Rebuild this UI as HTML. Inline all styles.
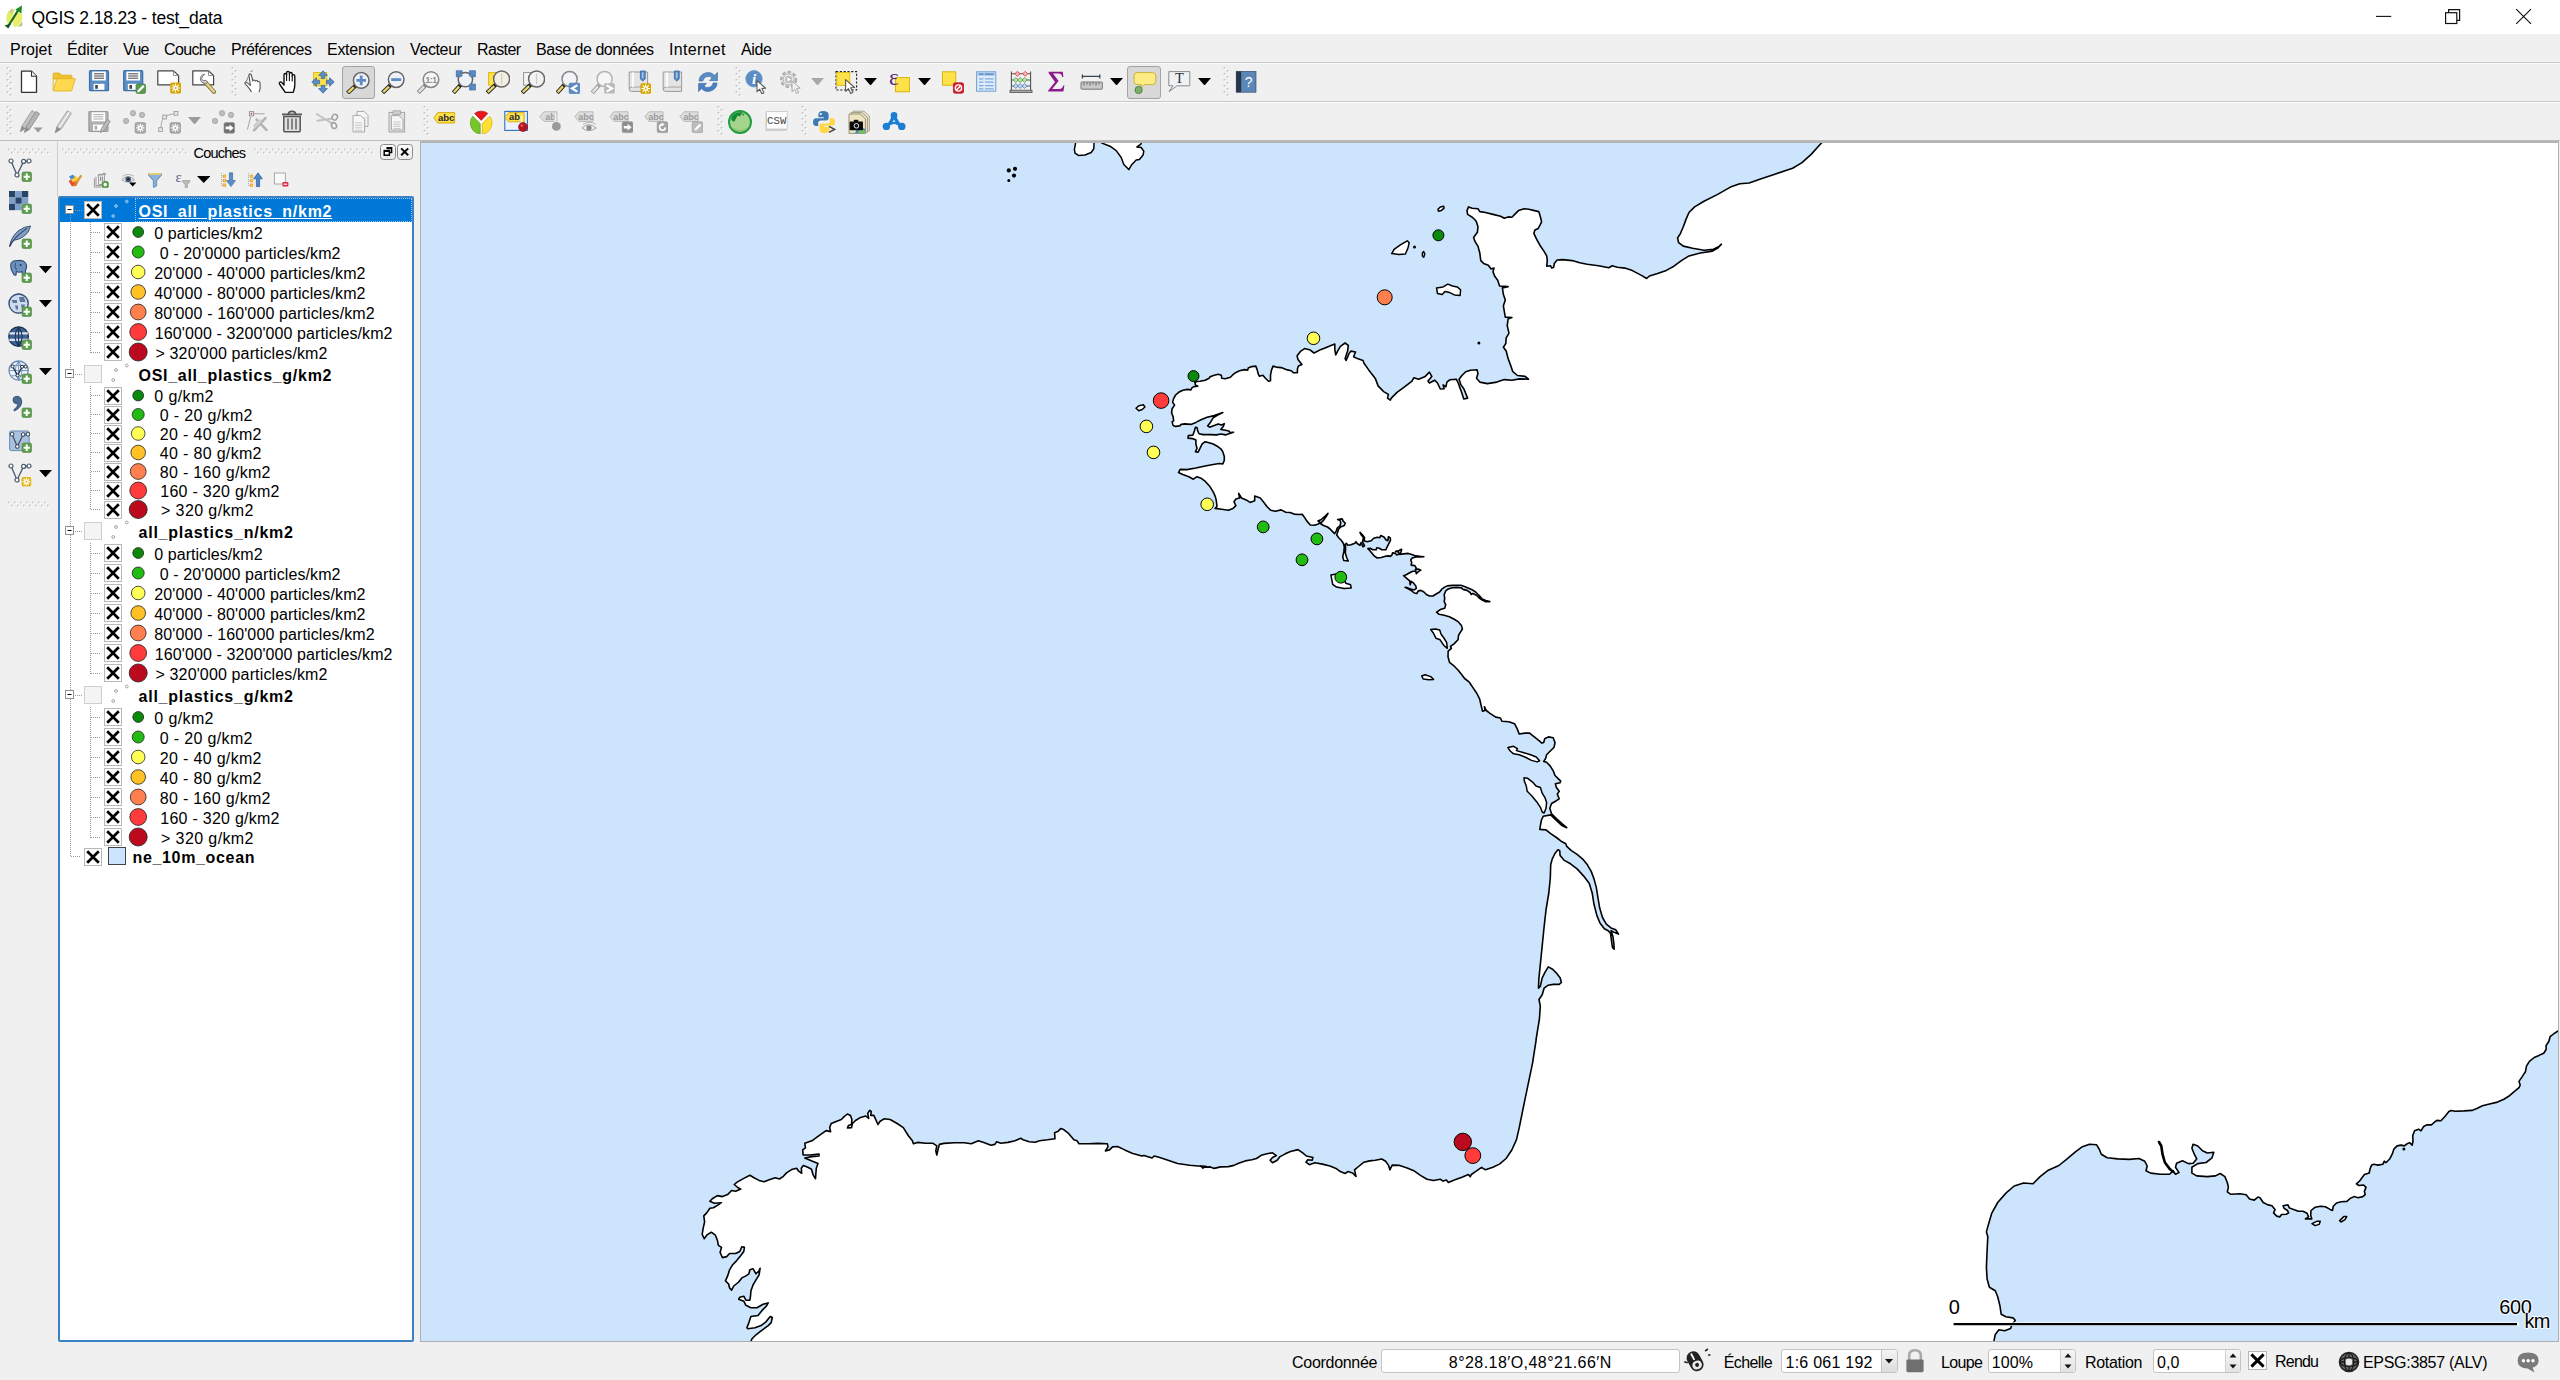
<!DOCTYPE html>
<html><head><meta charset="utf-8"><title>QGIS 2.18.23 - test_data</title>
<style>
*{margin:0;padding:0;box-sizing:border-box}
html,body{width:2560px;height:1380px;overflow:hidden;background:#f0f0f0;font-family:"Liberation Sans", sans-serif;}
.t{position:absolute;white-space:pre;line-height:1;font-family:"Liberation Sans", sans-serif;}
.a{position:absolute}
#title{left:0;top:0;width:2560px;height:34px;background:#fff}
#menu{left:0;top:34px;width:2560px;height:28px;background:#f0f0f0}
.hl{left:0;width:2560px;height:1px;background:#c9c9c9}
#map{left:420px;top:141px;width:2139px;height:1201px;border:1px solid #aeaeae;border-top:2px solid #b4b4b4;background:#cce5fd;overflow:hidden}
#tree{left:58px;top:196px;width:356px;height:1146px;background:#fff;border:2px solid #3c80c4;border-radius:2px}
#sel{left:60px;top:198px;width:352px;height:24px;background:#0078d7}
.cb{position:absolute;width:18px;height:18px;background:#fff;border:1px solid #b8b8b8}
.cbe{position:absolute;width:18px;height:18px;background:#f4f4f4;border:1px solid #cfcfcf}
.inp{position:absolute;background:#fff;border:1px solid #c4c4c4;border-radius:3px}
</style></head>
<body>
<div class="a" id="title"></div><div class="a" id="menu"></div>
<div class="a hl" style="top:62px"></div><div class="a hl" style="top:101px"></div><div class="a hl" style="top:140px;background:#bdbdbd"></div><div class="a hl" style="top:63px;background:#fafafa"></div><div class="a hl" style="top:102px;background:#fafafa"></div>
<div class="a" style="left:57px;top:141px;width:1px;height:56px;background:#cfcfcf"></div>
<div class="a" id="map"><svg class="a" style="left:-421px;top:-143px" width="2560" height="1380" viewBox="0 0 2560 1380">
<path d="M1830,120 1821.8,142.8 1818.9,145.7 1811.4,154.1 1802,162.6 1792.6,168.3 1775.6,173.9 1760.5,179 1749.2,183 1739.8,183.7 1730.4,187.1 1717.2,194.6 1704,201.2 1694.6,206.9 1689,212.5 1686.1,219.1 1683.3,226.7 1680.5,233.3 1677.6,238 1678.6,242.7 1683.3,246.1 1692.7,248.3 1704,250.2 1713.4,249.3 1719.1,246.4 1721.4,244.2 1718.1,247.8 1712.5,251.1 1700.3,253 1689,255.9 1681.4,260.6 1673.9,266.2 1666.3,270.4 1656.9,273.8 1649.4,276 1646.6,278.5 1641.9,275.6 1632.4,270.6 1624.9,268.1 1617.4,267.2 1612.1,265.8 1608.9,267.7 1598.5,265.8 1587.2,264.3 1579.7,262.8 1572.2,260.6 1562.7,259.6 1557.1,260 1554.3,263.4 1553.7,267.2 1551.8,268.1 1550.5,265.8 1546.7,266.2 1547.3,260.6 1546.7,255.9 1543.9,251.1 1540.1,245.5 1536.4,238.9 1533.9,233.3 1534.9,230 1538.2,228.5 1540.1,224.8 1541.6,221.9 1540.5,217.2 1538.8,211.6 1534.5,210.6 1528.8,209.3 1524.1,208.8 1518.5,210.6 1514.7,214.4 1511.9,217.2 1508.1,216.9 1504.3,218.2 1500.6,216.3 1493,214.4 1485.5,212.5 1479.8,211.6 1478,208.8 1472.3,208.2 1468.5,206.9 1467,210.6 1467.6,214.4 1472.3,217.2 1476.1,221 1478,226.7 1477.4,232.3 1473.6,237.4 1475.1,241.7 1478,246.4 1479.8,253 1480.8,260.6 1483.6,263.4 1488.3,265.3 1491.1,269 1494,268.1 1493,271.9 1494.9,276.6 1497.7,280.3 1499.6,286 1508.1,286.6 1502.4,287.9 1503.4,294.5 1505.3,300.1 1503.4,305.8 1504.3,311.4 1505.3,317.1 1511.9,317.5 1508.1,319 1507.2,325.6 1509,333.1 1506.2,337.8 1505.8,343.5 1503.4,347.2 1506.2,351 1508.1,358.5 1510.9,366.1 1512.8,371.7 1517.5,375.5 1525.1,376.4 1528.4,379.2 1519.4,378.9 1511.9,380.2 1504.3,379.6 1496.8,382.1 1487.4,383.6 1479.8,382.1 1476.5,378.3 1478,373.6 1477,369.8 1470.4,370.2 1465.7,371.7 1461.9,375.5 1459.1,379.2 1461,384.9 1463.8,388.7 1465.7,393.4 1467.6,398.1 1463.8,399 1461,390.6 1458.2,383 1456.3,379.2 1449.7,379.8 1446.9,382.1 1445.9,386.8 1443.1,384.9 1444.1,388.7 1440.3,389 1437.5,383 1434.6,380.2 1429.4,383 1428,381.1 1431.8,376.4 1429.4,372.1 1425.2,376.4 1418.6,379.2 1413.9,377.7 1412,381.1 1404.5,386.8 1397,392.4 1391.3,398.1 1390.3,400.1 1387.5,398.2 1388.4,394.4 1383.7,391.6 1378.1,385.9 1375.3,378.4 1368.7,369.9 1364,363.3 1363,360.5 1357.4,358.6 1353.6,356.7 1355.5,352 1350.8,351.1 1348.9,353.9 1346.1,360.5 1345.1,358.6 1347.6,351.1 1348.3,345.4 1345.1,343 1340.4,346.4 1337.6,351.1 1335.7,354.9 1334.8,349.2 1334.8,344.1 1331,345.4 1324.4,348.3 1319.7,350.1 1314,353 1310.3,350.1 1304.6,348.6 1300.8,351.1 1297.1,355.8 1298,359.6 1301.9,364.6 1298.4,366.1 1297.4,369.1 1297.4,372.7 1293.3,372.7 1291.3,370.7 1286.2,369.6 1281.1,367.6 1276.1,367.1 1273,366.1 1271.5,370.1 1270.5,375.2 1270.5,380.8 1268.5,381.3 1265.4,378.3 1262.9,375.2 1259.3,376.2 1258.3,374.2 1257.3,370.1 1255.8,366.1 1251.7,366.6 1248.2,368.1 1247.7,370.1 1244.6,369.6 1239.5,370.7 1235.5,372.7 1232.4,375.2 1230.4,377.2 1225.4,378.8 1221.8,378.3 1221.3,375.2 1218.3,374.2 1214.2,375.2 1210.1,376.7 1209.1,378.3 1205.1,380.3 1200,381.3 1196.4,381.5 1194.9,382.5 1195.4,384.9 1197.8,386.2 1193.9,386.6 1192.1,387.6 1190.9,389.9 1187.3,389.4 1182.8,390.2 1178.7,392.3 1175.6,395 1173.6,398.6 1172.6,402.1 1174.6,405.1 1172.1,408.7 1171.6,412.7 1173.1,416.8 1173.6,420.9 1172.1,421.9 1173.1,425.4 1175.6,426.4 1179.7,425.9 1181.2,424.4 1184.8,423.9 1190.9,424.4 1195.9,422.4 1201,419.8 1207.1,417.3 1214.2,415.6 1219.3,413.8 1222.8,412.6 1217.2,415.3 1213.2,417.8 1210.7,421.9 1207.6,425.9 1209.6,427.2 1214.2,425.4 1218.3,423.9 1221.3,424.9 1224.3,423.7 1223.3,426.4 1220.8,429.5 1224.3,430 1228.9,431 1229.9,432.5 1233.5,432.2 1228.9,433.8 1225.4,434.9 1221.3,434 1216.2,434.9 1210.1,434.6 1203,434.6 1199,433.8 1197.8,431 1197,427.5 1195.4,427.2 1194.4,431 1192.9,435.1 1188.3,435.6 1188,438.1 1192.4,438.6 1195.9,440.1 1195.9,444.2 1197,448.3 1195.4,451.8 1198,452.3 1200,448.3 1202,444.2 1205.1,441.7 1209.1,442.7 1213.2,444 1217.2,446.2 1220.8,448.8 1222.8,451.8 1224.3,456.4 1224.3,460.4 1222.8,464 1219.3,463.5 1213.2,464.5 1205.1,466 1195.9,468 1186.8,469.6 1180.2,469.4 1178.5,472.6 1182.8,474.6 1188.8,476.7 1193.4,479.2 1197,476.7 1201,478.2 1205.6,481.7 1210.1,486.8 1213.2,491.9 1215.2,496.4 1216.2,500 1217,506.5 1215.1,508.4 1221.7,509.3 1228.3,510.3 1233,508.4 1235.9,505.6 1234,501.8 1235.9,499 1239.6,498 1238.7,493.3 1241.5,498 1246.2,499.9 1250,502.4 1254.7,500.8 1254.7,496.1 1260.3,498 1264.1,502.7 1266.9,506.5 1270.7,510.3 1275.4,511.2 1281.1,509.9 1285.8,512.2 1290,512.5 1294.1,514.1 1298.6,514.5 1302.2,514.3 1304.2,516.9 1306.7,520.9 1310.3,525 1314.3,525.3 1318.4,524 1319.9,522.2 1317.9,520.9 1321.4,519.4 1325,516.4 1328,513.3 1326,516.9 1323.5,520.4 1320.4,523.5 1323.5,525.5 1327.5,527 1330.1,529 1332.6,531.6 1334.6,533.6 1336.2,531.1 1337.2,528 1340.2,525.5 1340.7,523 1340.2,520.4 1337.7,519.6 1342.2,518.9 1343.3,521.4 1345.3,523 1344.3,525.5 1340.7,527 1338.7,529 1337.7,532.1 1336.7,535.1 1338.7,537.7 1341.2,540.2 1343.3,543.3 1344.3,546.8 1343.8,551.9 1342.7,556.9 1343.8,560.5 1348.3,561 1346.8,558 1345.3,552.9 1345.6,548.3 1345.3,544.3 1346.3,543.3 1347.8,545.3 1350.9,544.8 1354.9,543.3 1355.9,541.7 1357.5,543.8 1360,545.3 1361,542.7 1363,546.8 1364.6,545.8 1362.5,541.7 1363.5,537.7 1361,534.6 1360,532.4 1363,535.6 1364.6,537.7 1364.1,540.7 1367.1,541.7 1371.2,540.7 1373.7,538.2 1377.2,537.2 1379.8,537.7 1380.8,535.6 1384.3,537.2 1385.9,539.7 1387.9,540.7 1388.4,536.7 1390.4,538.2 1390.4,540.7 1388.4,544.3 1386.9,547.3 1385.9,549.8 1381.8,549.8 1379.3,548.3 1376.7,547.8 1376.2,549.8 1372.7,549.8 1370.1,548.3 1367.9,548.6 1370.1,550.9 1372.2,553.4 1374.2,555.9 1377.2,558 1381.3,557.5 1384.8,556.4 1388.4,555.9 1390.4,556.4 1392,554.9 1392.5,552.9 1395.5,553.4 1396.5,554.9 1399.1,553.9 1398.5,551.9 1395.5,551.4 1399.1,550.4 1401.6,549.3 1401.1,551.9 1399.6,554.4 1403.6,553.9 1408.2,553.4 1411.7,554.4 1415.8,555.9 1419.9,556.4 1423.9,556.7 1420.4,556.9 1415.8,556.9 1412.2,558 1410.7,560 1411.7,562.5 1411.2,565.1 1414.8,565.6 1416.3,568.1 1415.3,569.6 1418.8,569.1 1420.8,570.1 1418.3,571.7 1416.3,573.7 1415.8,571.2 1412.7,571.2 1409.7,572.7 1406.2,574.7 1403.6,575.7 1406.7,578.3 1409.7,580.8 1410.2,584.8 1411.2,581.3 1413.3,582.8 1415.8,585.9 1416.3,588.4 1414.3,589.9 1410.7,588.9 1407.7,587.9 1405.1,587.4 1408.2,588.9 1411.7,590.9 1414.3,593 1416.8,593.5 1418.3,590.9 1420.8,590.4 1423.9,592 1426.4,594.5 1429.5,596 1433,596 1436.1,594 1439.6,592 1441.6,589.4 1444.2,587.4 1447.2,585.9 1452.3,585.4 1457.4,585.2 1460.9,585.2 1464.5,586.4 1468,587.9 1471.6,589.4 1475.6,592 1479.2,595.5 1482.2,599.1 1485.8,600.6 1489.8,601.6 1485.3,601.6 1482.2,600.1 1478.7,597.5 1476.1,595 1472.6,593.5 1471.1,594.5 1470.1,592.5 1467,590.4 1463,589.4 1461.4,587.9 1457.4,587.4 1452.3,587.7 1448.2,588.9 1445.7,590.9 1444.2,594.5 1444.7,598.5 1444.2,601.6 1445.7,604.6 1444.7,608.2 1441.1,609.2 1438.1,611.2 1436.6,612.2 1439.1,614.3 1444.2,615.3 1449.3,616.8 1454.3,619.3 1458.4,621.9 1461.4,625.4 1462.4,629 1458.6,635.1 1458,639.8 1454.3,643.6 1450.5,646.4 1451.4,648.3 1448.2,651.1 1448,656.8 1449.5,662.4 1453.3,665.3 1458,670 1461.8,674.7 1464.6,678.5 1469.3,682.2 1473.1,687.9 1476.9,693.5 1479.7,699.2 1481.2,705.8 1482.5,711.1 1485,710.5 1484.4,706.7 1486.3,710.5 1490,713.3 1495.7,717.1 1500.4,718 1501.9,721.2 1508.9,721.8 1514.5,723.7 1517,728.4 1519.2,734 1524.9,733.1 1529.6,733.1 1534.3,736.9 1539,740.6 1541.9,743.1 1543.7,742.5 1544.7,738.7 1548.4,736.9 1553.2,737.8 1555,742.5 1554.1,747.2 1550.3,751 1546.6,754.8 1545.6,758.5 1543.7,761.4 1546.6,762.3 1550.3,766.1 1553.2,770.8 1555,775.5 1557.9,778.3 1560.7,781.1 1560.1,782.8 1555.4,783.8 1556.4,787.5 1559.2,791.3 1557.3,794.1 1559.2,798.8 1556.4,800.7 1551.6,803.5 1549.8,808.3 1551.6,813.9 1556.4,818.6 1562,823.7 1566.7,827.7 1562,825.6 1556.4,820.5 1550.7,814.9 1543.2,816.2 1541.3,820.5 1540.3,826.2 1539.8,829.4 1546,829.9 1550.7,833.7 1556.4,837.5 1561.1,841.2 1565.8,843.7 1566.7,846.3 1571.4,850.6 1577.1,854.4 1582.7,859.1 1587.4,864.8 1591.2,871.4 1594,878.9 1596.3,887.4 1597.8,896.8 1599.7,908.1 1602.5,917.5 1606.3,924.1 1611,927.9 1615.7,929.8 1618.5,934.1 1614.8,932.6 1611,930.7 1612.9,936.4 1613.8,943 1614.2,949.2 1612.5,947.7 1611.4,940.1 1610.6,933.5 1608.2,930.7 1604.4,928.8 1600.1,923.2 1596.9,915.6 1594,904.3 1592.2,893 1589.3,883.6 1583.7,876.1 1577.1,868.9 1570.5,863.8 1563.9,860.1 1560.1,855.4 1559.7,850.6 1557.9,849.7 1554.9,853.5 1552.2,859.1 1550.7,864.8 1550.3,878 1548.8,893 1546,910 1544.1,926.9 1542.2,945.8 1540.3,964.6 1538.8,979.7 1538.5,988.2 1540.3,986.3 1542.2,977.8 1545.1,972.2 1548.3,966.9 1552.6,969.3 1556.4,973.1 1560.1,977.8 1561.4,982.5 1559.2,984.4 1553.5,984.4 1547.9,985.3 1544.1,988.2 1542.2,994.8 1539,999.5 1540.3,1006.1 1539.4,1019.2 1537.5,1030.6 1536,1040 1536.3,1038.8 1532.5,1063.3 1527.8,1085.9 1523.1,1108.5 1519.3,1127.4 1516.5,1139.6 1511.8,1150 1506.1,1158.5 1499.5,1164.1 1492.9,1167.3 1485.4,1169.8 1481.6,1167.3 1476.9,1170.7 1471.3,1174.5 1470.3,1176.7 1468.4,1174.5 1461.9,1177.3 1454.3,1180.1 1448.3,1182.4 1446.4,1180.1 1443,1181.1 1440.2,1179.2 1433.6,1180.5 1427,1179.2 1420.4,1175.4 1413.8,1170.7 1407.2,1167.9 1399.7,1165.4 1392.2,1165.1 1389.9,1169.8 1388.4,1165.1 1385.6,1161.3 1381.8,1159 1375.2,1160.3 1369.5,1160.9 1363.9,1162.2 1359.2,1166 1354.5,1169.8 1356,1176.4 1352.6,1173 1347.9,1171.6 1345.1,1173.5 1340.3,1171.6 1336.6,1168.8 1330,1166 1322.4,1164.1 1314.9,1162.8 1309.3,1164.7 1305.9,1162.2 1307.8,1159.8 1312.1,1160.3 1313,1157.5 1306.4,1156 1302.7,1152.8 1298,1149.6 1290.4,1151.5 1284.8,1154.1 1280.1,1156.6 1277.2,1160.3 1272.5,1162.8 1270.1,1160.3 1272.5,1157.5 1276.3,1155.6 1272.5,1152.8 1266.9,1153.8 1261.2,1155.3 1256.5,1158.5 1251.8,1159.8 1245.2,1160.9 1238.6,1163.2 1233.9,1165.4 1228.3,1166.6 1220.7,1166.9 1214.1,1168.4 1210.4,1166.9 1203.8,1167.3 1200,1166 1205.9,1166.2 1202.9,1168.2 1200.9,1166.2 1189.7,1165.2 1177.5,1163.5 1167.3,1160.1 1158.2,1157 1154.1,1156 1152.1,1158 1144,1155.4 1142,1156 1132.8,1153.4 1124.7,1149.9 1117.6,1146.5 1112.5,1146.9 1109.5,1149.9 1105.4,1150.9 1108,1146.9 1107.4,1143.8 1098.3,1143.4 1088.1,1143.8 1079,1143.8 1077,1140.8 1073.9,1139.8 1068.8,1133.7 1063.7,1129.6 1060.7,1128.6 1057.7,1131.6 1054.6,1132.7 1055,1138.7 1047.5,1139.8 1039.4,1140.8 1035.3,1142.2 1029.2,1141.8 1023.1,1139.8 1020.7,1138.3 1015,1140.8 1007.9,1142.4 1000.8,1143.2 996.7,1141.8 994.7,1144.4 991,1145.2 984.5,1142.8 978.4,1140.8 971.3,1143.8 964.2,1142.8 954.1,1142.8 943.9,1143.4 939.4,1144.4 938.2,1148.9 936.8,1155 935.8,1150.9 936.8,1145.9 932.7,1143.2 925.6,1143.2 917.5,1142.4 913.4,1143.8 912.4,1140.8 908.4,1135.7 903.3,1127.6 897.2,1123.5 890.1,1119.5 884,1118.8 879.9,1121.5 877.9,1124.5 875.2,1118.4 873.8,1115.4 870.8,1115.4 871.2,1111.3 869.8,1110.3 867.7,1113.4 868.7,1118.4 865.7,1116 860.6,1117.4 855.5,1120.5 852.5,1123.5 851.5,1127.6 847.4,1128 848.4,1125.5 851.5,1124.5 851.9,1119.5 850.5,1115.4 847.4,1114 844.4,1116.4 841.3,1119.5 836.2,1121.5 831.2,1123.5 829.7,1127.6 830.6,1131.6 826.1,1130.6 819,1135.7 811.9,1140.8 804.8,1143.2 805.4,1147.9 802.7,1149.9 803.1,1155 809.8,1155 819,1154 819,1156 811.9,1156.6 804.8,1158 811.9,1161.1 818,1163.5 816.3,1168.2 815.9,1173.3 815.5,1178.8 812.9,1174.3 811.5,1169.2 807.8,1167.2 803.3,1165.6 801.3,1168.2 801.7,1173.3 798.7,1171.2 796.6,1168.2 791.6,1169.6 786.5,1172.9 783.4,1176.3 779.4,1179 775.3,1177.7 769.2,1179.8 764.1,1181.8 759.1,1180.4 754,1177.7 749.9,1175.3 743.8,1178.4 736.7,1182.4 734.3,1184.5 737.7,1187.5 740.8,1189.1 735.7,1191.2 731.6,1190.5 727.6,1194.6 722.5,1196.6 717.4,1195.6 712.3,1198.7 709.9,1201.3 714.4,1203.3 721.5,1202.7 717.4,1205.4 713.4,1207.8 709.9,1208.2 706.7,1212.9 703.8,1215.9 704.6,1222 703.2,1228.1 702.2,1234.2 704.2,1238.7 707.3,1234.6 711.3,1232.2 715.4,1235.2 717.4,1240.3 718.4,1245.4 721.5,1247.4 720.1,1252.5 722.5,1257.6 726.6,1256.6 729.6,1253.5 735.7,1253.5 739.8,1251.5 741.8,1246.8 744.4,1247.4 743.8,1251.5 740.8,1255.5 736.7,1260.6 732.7,1264.7 729.6,1269.8 727.6,1275.9 725.5,1280.9 728.6,1284 729.6,1288 731.6,1290.1 733.7,1286 738.7,1282 741.8,1277.9 745.9,1275.9 748.9,1273.8 749.9,1269.8 753,1268.7 756,1273.8 759.1,1270.8 760.1,1268.3 759.1,1274.8 756,1279.9 753,1285 750.9,1291.1 750.5,1296.2 749.9,1300.2 745.9,1300.2 743.8,1296.2 739.8,1297.2 738.7,1299.2 743.8,1301.2 745.9,1305.3 750.9,1307.7 757,1307.7 763.1,1304.3 768.2,1302.9 766.2,1306.3 762.1,1310.4 758,1315.5 750.9,1316.5 748.9,1322.6 746.9,1327.7 747.9,1328.7 755,1327.7 761.1,1325.6 766.2,1321.6 770.2,1316.5 772.3,1317.5 771.2,1322.6 768.2,1325.6 764.1,1328.7 760.1,1331.7 756,1334.8 752,1338.8 749.9,1343.9 746.9,1352 740,1400 1990,1400 1993,1349.7 1994.1,1340.2 1995.3,1334.4 1998.9,1329.7 2004.7,1330.8 2010.6,1328.5 2011.8,1324.9 2015.3,1320.2 2013,1317.9 2005.9,1316.7 2001.2,1314.3 2000,1306.1 1997.7,1296.7 1995.3,1290.8 1989.4,1287.3 1987.1,1279 1986.4,1267.3 1987.1,1250.8 1987.8,1236.6 1986.4,1231.9 1988.3,1224.9 1991.8,1213.1 1997.7,1202.5 2005.9,1193.1 2014.2,1186 2023.6,1183 2033,1183.7 2040.1,1176.6 2048.3,1170.2 2058.9,1165.5 2067.1,1158.9 2075.4,1151.9 2082.4,1146.7 2089.5,1144.3 2096.6,1144.8 2099.4,1149.5 2101.3,1154.2 2107.2,1157.8 2117.8,1158.9 2129.5,1159.4 2139,1158.5 2144.8,1161.3 2147.2,1166 2146,1170.7 2150.7,1173.1 2160.2,1174.2 2169.6,1174.2 2173.1,1170.7 2175.5,1174.2 2179,1172.6 2175.5,1167.2 2176.6,1163.2 2182.5,1160.8 2188.4,1163.6 2193.1,1163.2 2196.7,1158.9 2194.3,1154.2 2191.9,1148.3 2193.1,1144.3 2197.8,1146 2202.5,1150.7 2207.3,1153 2213.8,1152.3 2212,1157.8 2206.1,1162.5 2197.8,1163.6 2191.9,1167.2 2191.9,1173.1 2196.7,1175.9 2207.3,1176.6 2215.5,1175.9 2220.2,1173.5 2224.9,1176.6 2227.3,1182.5 2228.4,1187.2 2227.3,1191.9 2230.8,1194.3 2240.2,1193.8 2246.1,1194.7 2249.6,1199 2254.3,1200.1 2257.9,1197.1 2260,1197.7 2263.2,1202.5 2268,1204.9 2272,1205.7 2275.1,1209.7 2273.6,1212.9 2276.7,1216.1 2279.9,1216.9 2281.5,1214.5 2286.3,1214.2 2288.7,1212.9 2287.4,1210.5 2283.9,1208.1 2283.1,1205.7 2287.9,1204.9 2289.5,1208.1 2294.3,1209.7 2298.3,1211.3 2303,1211.3 2307,1213.2 2308.6,1216.9 2305.4,1218.9 2311.8,1218.9 2310.7,1215.3 2311,1210.5 2315,1207.3 2320.6,1206.2 2325.4,1206.8 2330.1,1209.4 2332.5,1210.5 2333.3,1206.2 2336.5,1203 2341.3,1201.7 2346.9,1201.4 2350.1,1198.5 2354,1196.6 2358,1197.7 2362.8,1196.6 2365.2,1194.6 2364.4,1191.4 2366,1187.4 2363.6,1185 2358.8,1185.5 2356.4,1183.9 2359.6,1181 2362,1177.8 2364.4,1174.6 2369.2,1173 2370,1169 2371.6,1165.1 2374,1164.3 2378,1165.1 2382.8,1164.3 2384.3,1161.1 2385.9,1162.7 2389.9,1158.7 2392.3,1153.9 2393.9,1149.1 2397.1,1145.9 2401.1,1145.1 2404.3,1145.9 2407.5,1143.5 2409.8,1142.8 2412.2,1145.1 2413,1141.2 2412.7,1135.6 2414.6,1130.8 2418.6,1129.2 2421,1130.8 2423.4,1126.8 2426.6,1124.9 2431.4,1124.9 2434.6,1122 2436.9,1120.4 2440.9,1120.7 2444.9,1116.5 2448.9,1111.6 2451.3,1110.5 2455.3,1111.2 2464,1110.9 2472,1110.4 2476.8,1108.5 2482.4,1105.8 2489.5,1104 2497.5,1102.1 2503.9,1099.2 2509.5,1095.7 2514.2,1091.7 2519,1087.7 2520.2,1085 2519,1081.4 2522.2,1076.6 2525.4,1071.8 2526.5,1066.2 2529.4,1061.4 2534.2,1057.5 2539,1055.4 2543.7,1053.2 2546.1,1049.5 2546.1,1045.5 2548.8,1041.5 2550.1,1036.7 2554.1,1033.5 2557.8,1031.2 2562.8,1027.1 2572.2,1022.4 2600,120Z" fill="#fff" stroke="#000" stroke-width="1.6" stroke-linejoin="round"/>
<path d="M1075.6,135 1075.6,143.1 1074.4,149.4 1075,153.1 1078.8,155.6 1085,155 1091.2,152.5 1093.8,148.8 1094,143.1 1094,135Z M1097.5,135 1101.9,143.1 1110,146.2 1116.2,150.6 1121.2,157.5 1123.8,164.4 1128.8,169.6 1131.9,164.4 1136.2,160 1139.4,159.4 1143.1,155 1143.8,151.2 1141.2,147.5 1136.9,146.9 1140.6,144.4 1141.2,143.1 1142.5,135Z M1391.7,253.6 1394.1,249.3 1400.7,244.6 1407.3,240.8 1409.2,242.7 1407.9,248.3 1405.4,254 1398.8,254.5Z M1436.5,287.9 1443.1,286.9 1447.8,284.1 1452.5,286 1457.2,286.9 1460.6,289.8 1460.1,295.4 1454.4,294.9 1449.7,292.6 1445,291.6 1442.2,294.5 1437.5,293.5Z M1438,209.3 1440.3,206.9 1443.7,206.3 1444.1,208.2 1441.2,210.6 1438.4,211.2Z M1422.4,253 1423.7,251.5 1424.8,254 1423.7,257.2 1422.4,255.9Z M1136,408.2 1138.8,405.7 1143.5,404.8 1144.9,407 1142.2,409.5 1138.8,410.8Z M1330.9,574.9 1336.5,573.9 1343.1,577.7 1345.9,583.3 1350.6,584.8 1351.2,588 1344.1,588.6 1336.5,587.1 1332.7,584.3 1331.8,579.6Z M1430.7,629.5 1435.4,628.9 1439.7,630 1441.1,634.2 1443.9,638 1446.7,642.7 1447.3,648.3 1443.9,645.5 1440.1,639.8 1436,638.3 1433.5,633.3Z M1421.7,676 1425.1,674.7 1430.7,676.6 1433.5,679.4 1428.8,679.8 1423.2,679Z M1507.9,747.6 1513.6,746.3 1517.4,748.7 1516.4,750.6 1523,752.5 1530.6,754.8 1536.2,757 1539.6,760.8 1537.1,761.9 1531.5,760.4 1524.9,757 1519.2,754.8 1513.6,753.8 1510.2,751Z M1524,777.8 1527.7,778.3 1532.5,782.1 1536,786 1540.4,787.5 1542.2,793.2 1545.1,797.9 1546.6,802.6 1546,808.3 1544.1,813 1542.2,812 1540.4,807.3 1536.6,801.7 1531.9,796 1527.2,791.3 1526.2,785.7 1524.3,781Z M2312,1223.7 2316.7,1221.3 2320.3,1221.3 2319.1,1224.4 2315.1,1225.6Z M2339.6,1220.6 2343.8,1216.6 2346.7,1216.6 2345,1219.7 2341,1222Z" fill="#fff" stroke="#000" stroke-width="1.5" stroke-linejoin="round"/>
<circle cx="1008.8" cy="170.4" r="2.1" fill="#000"/>
<circle cx="1015.0" cy="168.8" r="2.1" fill="#000"/>
<circle cx="1014.0" cy="175.6" r="2.1" fill="#000"/>
<circle cx="1008.8" cy="180.6" r="1.5" fill="#000"/>
<circle cx="1414.5" cy="247.0" r="1.5" fill="#000"/>
<circle cx="1478.9" cy="343.1" r="1.5" fill="#000"/>
<circle cx="2403.9" cy="1149.0" r="1.5" fill="#000"/>
<path d="M2159,1142 2161.3,1146 2162.5,1154.2 2164.9,1162.5 2169.6,1168.8 2173.1,1171.9" fill="none" stroke="#000" stroke-width="2.6" stroke-linecap="round"/>
<circle cx="1438.4" cy="235.3" r="5.5" fill="#0a8a0a" stroke="#000" stroke-width="1"/>
<circle cx="1384.7" cy="297.3" r="7.5" fill="#ff7f4f" stroke="#000" stroke-width="1"/>
<circle cx="1313.5" cy="338.3" r="6.3" fill="#ffff55" stroke="#000" stroke-width="1"/>
<circle cx="1193.5" cy="376.1" r="5.5" fill="#0a8a0a" stroke="#000" stroke-width="1"/>
<circle cx="1161.1" cy="400.6" r="7.8" fill="#ff3b3b" stroke="#000" stroke-width="1"/>
<circle cx="1146.4" cy="426.4" r="6.3" fill="#ffff55" stroke="#000" stroke-width="1"/>
<circle cx="1153.5" cy="452.4" r="6.3" fill="#ffff55" stroke="#000" stroke-width="1"/>
<circle cx="1207.2" cy="504.3" r="6.3" fill="#ffff55" stroke="#000" stroke-width="1"/>
<circle cx="1263.2" cy="526.9" r="5.9" fill="#22bb11" stroke="#000" stroke-width="1"/>
<circle cx="1316.9" cy="538.9" r="5.9" fill="#22bb11" stroke="#000" stroke-width="1"/>
<circle cx="1302" cy="559.8" r="5.9" fill="#22bb11" stroke="#000" stroke-width="1"/>
<circle cx="1340.8" cy="577.2" r="5.9" fill="#22bb11" stroke="#000" stroke-width="1"/>
<circle cx="1462.8" cy="1141.9" r="8.7" fill="#bb0a1e" stroke="#000" stroke-width="1"/>
<circle cx="1472.8" cy="1155.6" r="7.9" fill="#ff3b3b" stroke="#000" stroke-width="1"/>
<path d="M1953.6,1324.1 H2517" stroke="#fff" stroke-width="3.8" stroke-linecap="square" opacity="0.85"/><path d="M1953.6,1324.1 H2517" stroke="#000" stroke-width="2.4"/>
<g font-family="Liberation Sans" font-size="20" fill="#000" stroke="#fff" stroke-width="2.2" stroke-opacity="0.85" paint-order="stroke" stroke-linejoin="round"><text x="1948.8" y="1313.8">0</text><text x="2499.2" y="1313.8" textLength="32.6">600</text><text x="2524.6" y="1327.6" textLength="25.8">km</text></g>
</svg></div>
<div class="a" id="tree"></div><div class="a" id="sel"></div>
<div class="a" style="left:135px;top:198px;width:277px;height:24px;border:1px dotted #9cc8f2"></div>
<svg class="a" style="left:0;top:0" width="420" height="900" viewBox="0 0 420 900"><g stroke="#9a9a9a" stroke-width="1" stroke-dasharray="1 1" fill="none" shape-rendering="crispEdges"><path d="M70.5,215 V856.5 H81"/><path d="M90.5,222 V352.5"/><path d="M91,232.5 H100"/><path d="M91,252.5 H100"/><path d="M91,272.5 H100"/><path d="M91,292.5 H100"/><path d="M91,312.5 H100"/><path d="M91,332.5 H100"/><path d="M91,352.5 H100"/><path d="M75,210.5 H82"/><path d="M90.5,386 V509.5"/><path d="M91,395.5 H100"/><path d="M91,414.5 H100"/><path d="M91,433.5 H100"/><path d="M91,452.5 H100"/><path d="M91,471.5 H100"/><path d="M91,490.5 H100"/><path d="M91,509.5 H100"/><path d="M75,374.5 H82"/><path d="M90.5,543 V673.5"/><path d="M91,553.5 H100"/><path d="M91,573.5 H100"/><path d="M91,593.5 H100"/><path d="M91,613.5 H100"/><path d="M91,633.5 H100"/><path d="M91,653.5 H100"/><path d="M91,673.5 H100"/><path d="M75,531.5 H82"/><path d="M90.5,707 V837.5"/><path d="M91,717.5 H100"/><path d="M91,737.5 H100"/><path d="M91,757.5 H100"/><path d="M91,777.5 H100"/><path d="M91,797.5 H100"/><path d="M91,817.5 H100"/><path d="M91,837.5 H100"/><path d="M75,695.5 H82"/></g><rect x="65.5" y="205.5" width="8" height="8" fill="#fff" stroke="#919191"/><path d="M67.5,209.5 h4" stroke="#000" stroke-width="1"/><circle cx="116" cy="206" r="1.4" fill="#5ba4e8" stroke="#8fc4f4" stroke-width="0.9"/><circle cx="126.8" cy="201.5" r="1.4" fill="#5ba4e8" stroke="#8fc4f4" stroke-width="0.9"/><circle cx="113.2" cy="216" r="1.4" fill="#5ba4e8" stroke="#8fc4f4" stroke-width="0.9"/><circle cx="138.2" cy="232" r="5.4" fill="#0a8a0a" stroke="#222" stroke-width="0.8"/><circle cx="138.2" cy="252" r="6.0" fill="#22bb11" stroke="#222" stroke-width="0.8"/><circle cx="138.2" cy="272" r="6.8" fill="#ffff55" stroke="#222" stroke-width="0.8"/><circle cx="138.2" cy="292" r="7.3" fill="#ffc125" stroke="#222" stroke-width="0.8"/><circle cx="138.2" cy="312" r="7.9" fill="#ff7f4f" stroke="#222" stroke-width="0.8"/><circle cx="138.2" cy="332" r="8.4" fill="#ff3b3b" stroke="#222" stroke-width="0.8"/><circle cx="138.2" cy="352" r="9.0" fill="#bb0a1e" stroke="#222" stroke-width="0.8"/><rect x="65.5" y="369.5" width="8" height="8" fill="#fff" stroke="#919191"/><path d="M67.5,373.5 h4" stroke="#000" stroke-width="1"/><circle cx="116" cy="370" r="1.4" fill="#fff" stroke="#9a9a9a" stroke-width="0.9"/><circle cx="126.8" cy="365.5" r="1.4" fill="#fff" stroke="#9a9a9a" stroke-width="0.9"/><circle cx="113.2" cy="380" r="1.4" fill="#fff" stroke="#9a9a9a" stroke-width="0.9"/><circle cx="138.2" cy="395.5" r="5.4" fill="#0a8a0a" stroke="#222" stroke-width="0.8"/><circle cx="138.2" cy="414.5" r="6.0" fill="#22bb11" stroke="#222" stroke-width="0.8"/><circle cx="138.2" cy="433.5" r="6.8" fill="#ffff55" stroke="#222" stroke-width="0.8"/><circle cx="138.2" cy="452.5" r="7.3" fill="#ffc125" stroke="#222" stroke-width="0.8"/><circle cx="138.2" cy="471.5" r="7.9" fill="#ff7f4f" stroke="#222" stroke-width="0.8"/><circle cx="138.2" cy="490.5" r="8.4" fill="#ff3b3b" stroke="#222" stroke-width="0.8"/><circle cx="138.2" cy="509.5" r="9.0" fill="#bb0a1e" stroke="#222" stroke-width="0.8"/><rect x="65.5" y="526.5" width="8" height="8" fill="#fff" stroke="#919191"/><path d="M67.5,530.5 h4" stroke="#000" stroke-width="1"/><circle cx="116" cy="527" r="1.4" fill="#fff" stroke="#9a9a9a" stroke-width="0.9"/><circle cx="126.8" cy="522.5" r="1.4" fill="#fff" stroke="#9a9a9a" stroke-width="0.9"/><circle cx="113.2" cy="537" r="1.4" fill="#fff" stroke="#9a9a9a" stroke-width="0.9"/><circle cx="138.2" cy="553" r="5.4" fill="#0a8a0a" stroke="#222" stroke-width="0.8"/><circle cx="138.2" cy="573" r="6.0" fill="#22bb11" stroke="#222" stroke-width="0.8"/><circle cx="138.2" cy="593" r="6.8" fill="#ffff55" stroke="#222" stroke-width="0.8"/><circle cx="138.2" cy="613" r="7.3" fill="#ffc125" stroke="#222" stroke-width="0.8"/><circle cx="138.2" cy="633" r="7.9" fill="#ff7f4f" stroke="#222" stroke-width="0.8"/><circle cx="138.2" cy="653" r="8.4" fill="#ff3b3b" stroke="#222" stroke-width="0.8"/><circle cx="138.2" cy="673" r="9.0" fill="#bb0a1e" stroke="#222" stroke-width="0.8"/><rect x="65.5" y="690.5" width="8" height="8" fill="#fff" stroke="#919191"/><path d="M67.5,694.5 h4" stroke="#000" stroke-width="1"/><circle cx="116" cy="691" r="1.4" fill="#fff" stroke="#9a9a9a" stroke-width="0.9"/><circle cx="126.8" cy="686.5" r="1.4" fill="#fff" stroke="#9a9a9a" stroke-width="0.9"/><circle cx="113.2" cy="701" r="1.4" fill="#fff" stroke="#9a9a9a" stroke-width="0.9"/><circle cx="138.2" cy="717" r="5.4" fill="#0a8a0a" stroke="#222" stroke-width="0.8"/><circle cx="138.2" cy="737" r="6.0" fill="#22bb11" stroke="#222" stroke-width="0.8"/><circle cx="138.2" cy="757" r="6.8" fill="#ffff55" stroke="#222" stroke-width="0.8"/><circle cx="138.2" cy="777" r="7.3" fill="#ffc125" stroke="#222" stroke-width="0.8"/><circle cx="138.2" cy="797" r="7.9" fill="#ff7f4f" stroke="#222" stroke-width="0.8"/><circle cx="138.2" cy="817" r="8.4" fill="#ff3b3b" stroke="#222" stroke-width="0.8"/><circle cx="138.2" cy="837" r="9.0" fill="#bb0a1e" stroke="#222" stroke-width="0.8"/><rect x="108.5" y="847.5" width="17" height="17" fill="#cce5fd" stroke="#444" stroke-width="1"/></svg>
<div class="cb" style="left:83.5px;top:201px;width:18px;height:18px"></div><svg class="a" style="left:83.5px;top:201px" width="18" height="18" viewBox="0 0 18 18"><path d="M3.2,3.2 14.8,14.8M14.8,3.2 3.2,14.8" stroke="#000" stroke-width="2.7" fill="none"/></svg>
<div class="cb" style="left:104px;top:223px;width:18px;height:18px"></div><svg class="a" style="left:104px;top:223px" width="18" height="18" viewBox="0 0 18 18"><path d="M3.2,3.2 14.8,14.8M14.8,3.2 3.2,14.8" stroke="#000" stroke-width="2.7" fill="none"/></svg>
<div class="cb" style="left:104px;top:243px;width:18px;height:18px"></div><svg class="a" style="left:104px;top:243px" width="18" height="18" viewBox="0 0 18 18"><path d="M3.2,3.2 14.8,14.8M14.8,3.2 3.2,14.8" stroke="#000" stroke-width="2.7" fill="none"/></svg>
<div class="cb" style="left:104px;top:263px;width:18px;height:18px"></div><svg class="a" style="left:104px;top:263px" width="18" height="18" viewBox="0 0 18 18"><path d="M3.2,3.2 14.8,14.8M14.8,3.2 3.2,14.8" stroke="#000" stroke-width="2.7" fill="none"/></svg>
<div class="cb" style="left:104px;top:283px;width:18px;height:18px"></div><svg class="a" style="left:104px;top:283px" width="18" height="18" viewBox="0 0 18 18"><path d="M3.2,3.2 14.8,14.8M14.8,3.2 3.2,14.8" stroke="#000" stroke-width="2.7" fill="none"/></svg>
<div class="cb" style="left:104px;top:303px;width:18px;height:18px"></div><svg class="a" style="left:104px;top:303px" width="18" height="18" viewBox="0 0 18 18"><path d="M3.2,3.2 14.8,14.8M14.8,3.2 3.2,14.8" stroke="#000" stroke-width="2.7" fill="none"/></svg>
<div class="cb" style="left:104px;top:323px;width:18px;height:18px"></div><svg class="a" style="left:104px;top:323px" width="18" height="18" viewBox="0 0 18 18"><path d="M3.2,3.2 14.8,14.8M14.8,3.2 3.2,14.8" stroke="#000" stroke-width="2.7" fill="none"/></svg>
<div class="cb" style="left:104px;top:343px;width:18px;height:18px"></div><svg class="a" style="left:104px;top:343px" width="18" height="18" viewBox="0 0 18 18"><path d="M3.2,3.2 14.8,14.8M14.8,3.2 3.2,14.8" stroke="#000" stroke-width="2.7" fill="none"/></svg>
<div class="cbe" style="left:83.5px;top:365px;width:18px;height:18px"></div>
<div class="cb" style="left:104px;top:387px;width:18px;height:18px"></div><svg class="a" style="left:104px;top:387px" width="18" height="18" viewBox="0 0 18 18"><path d="M3.2,3.2 14.8,14.8M14.8,3.2 3.2,14.8" stroke="#000" stroke-width="2.7" fill="none"/></svg>
<div class="cb" style="left:104px;top:406px;width:18px;height:18px"></div><svg class="a" style="left:104px;top:406px" width="18" height="18" viewBox="0 0 18 18"><path d="M3.2,3.2 14.8,14.8M14.8,3.2 3.2,14.8" stroke="#000" stroke-width="2.7" fill="none"/></svg>
<div class="cb" style="left:104px;top:425px;width:18px;height:18px"></div><svg class="a" style="left:104px;top:425px" width="18" height="18" viewBox="0 0 18 18"><path d="M3.2,3.2 14.8,14.8M14.8,3.2 3.2,14.8" stroke="#000" stroke-width="2.7" fill="none"/></svg>
<div class="cb" style="left:104px;top:444px;width:18px;height:18px"></div><svg class="a" style="left:104px;top:444px" width="18" height="18" viewBox="0 0 18 18"><path d="M3.2,3.2 14.8,14.8M14.8,3.2 3.2,14.8" stroke="#000" stroke-width="2.7" fill="none"/></svg>
<div class="cb" style="left:104px;top:463px;width:18px;height:18px"></div><svg class="a" style="left:104px;top:463px" width="18" height="18" viewBox="0 0 18 18"><path d="M3.2,3.2 14.8,14.8M14.8,3.2 3.2,14.8" stroke="#000" stroke-width="2.7" fill="none"/></svg>
<div class="cb" style="left:104px;top:482px;width:18px;height:18px"></div><svg class="a" style="left:104px;top:482px" width="18" height="18" viewBox="0 0 18 18"><path d="M3.2,3.2 14.8,14.8M14.8,3.2 3.2,14.8" stroke="#000" stroke-width="2.7" fill="none"/></svg>
<div class="cb" style="left:104px;top:501px;width:18px;height:18px"></div><svg class="a" style="left:104px;top:501px" width="18" height="18" viewBox="0 0 18 18"><path d="M3.2,3.2 14.8,14.8M14.8,3.2 3.2,14.8" stroke="#000" stroke-width="2.7" fill="none"/></svg>
<div class="cbe" style="left:83.5px;top:522px;width:18px;height:18px"></div>
<div class="cb" style="left:104px;top:544px;width:18px;height:18px"></div><svg class="a" style="left:104px;top:544px" width="18" height="18" viewBox="0 0 18 18"><path d="M3.2,3.2 14.8,14.8M14.8,3.2 3.2,14.8" stroke="#000" stroke-width="2.7" fill="none"/></svg>
<div class="cb" style="left:104px;top:564px;width:18px;height:18px"></div><svg class="a" style="left:104px;top:564px" width="18" height="18" viewBox="0 0 18 18"><path d="M3.2,3.2 14.8,14.8M14.8,3.2 3.2,14.8" stroke="#000" stroke-width="2.7" fill="none"/></svg>
<div class="cb" style="left:104px;top:584px;width:18px;height:18px"></div><svg class="a" style="left:104px;top:584px" width="18" height="18" viewBox="0 0 18 18"><path d="M3.2,3.2 14.8,14.8M14.8,3.2 3.2,14.8" stroke="#000" stroke-width="2.7" fill="none"/></svg>
<div class="cb" style="left:104px;top:604px;width:18px;height:18px"></div><svg class="a" style="left:104px;top:604px" width="18" height="18" viewBox="0 0 18 18"><path d="M3.2,3.2 14.8,14.8M14.8,3.2 3.2,14.8" stroke="#000" stroke-width="2.7" fill="none"/></svg>
<div class="cb" style="left:104px;top:624px;width:18px;height:18px"></div><svg class="a" style="left:104px;top:624px" width="18" height="18" viewBox="0 0 18 18"><path d="M3.2,3.2 14.8,14.8M14.8,3.2 3.2,14.8" stroke="#000" stroke-width="2.7" fill="none"/></svg>
<div class="cb" style="left:104px;top:644px;width:18px;height:18px"></div><svg class="a" style="left:104px;top:644px" width="18" height="18" viewBox="0 0 18 18"><path d="M3.2,3.2 14.8,14.8M14.8,3.2 3.2,14.8" stroke="#000" stroke-width="2.7" fill="none"/></svg>
<div class="cb" style="left:104px;top:664px;width:18px;height:18px"></div><svg class="a" style="left:104px;top:664px" width="18" height="18" viewBox="0 0 18 18"><path d="M3.2,3.2 14.8,14.8M14.8,3.2 3.2,14.8" stroke="#000" stroke-width="2.7" fill="none"/></svg>
<div class="cbe" style="left:83.5px;top:686px;width:18px;height:18px"></div>
<div class="cb" style="left:104px;top:708px;width:18px;height:18px"></div><svg class="a" style="left:104px;top:708px" width="18" height="18" viewBox="0 0 18 18"><path d="M3.2,3.2 14.8,14.8M14.8,3.2 3.2,14.8" stroke="#000" stroke-width="2.7" fill="none"/></svg>
<div class="cb" style="left:104px;top:728px;width:18px;height:18px"></div><svg class="a" style="left:104px;top:728px" width="18" height="18" viewBox="0 0 18 18"><path d="M3.2,3.2 14.8,14.8M14.8,3.2 3.2,14.8" stroke="#000" stroke-width="2.7" fill="none"/></svg>
<div class="cb" style="left:104px;top:748px;width:18px;height:18px"></div><svg class="a" style="left:104px;top:748px" width="18" height="18" viewBox="0 0 18 18"><path d="M3.2,3.2 14.8,14.8M14.8,3.2 3.2,14.8" stroke="#000" stroke-width="2.7" fill="none"/></svg>
<div class="cb" style="left:104px;top:768px;width:18px;height:18px"></div><svg class="a" style="left:104px;top:768px" width="18" height="18" viewBox="0 0 18 18"><path d="M3.2,3.2 14.8,14.8M14.8,3.2 3.2,14.8" stroke="#000" stroke-width="2.7" fill="none"/></svg>
<div class="cb" style="left:104px;top:788px;width:18px;height:18px"></div><svg class="a" style="left:104px;top:788px" width="18" height="18" viewBox="0 0 18 18"><path d="M3.2,3.2 14.8,14.8M14.8,3.2 3.2,14.8" stroke="#000" stroke-width="2.7" fill="none"/></svg>
<div class="cb" style="left:104px;top:808px;width:18px;height:18px"></div><svg class="a" style="left:104px;top:808px" width="18" height="18" viewBox="0 0 18 18"><path d="M3.2,3.2 14.8,14.8M14.8,3.2 3.2,14.8" stroke="#000" stroke-width="2.7" fill="none"/></svg>
<div class="cb" style="left:104px;top:828px;width:18px;height:18px"></div><svg class="a" style="left:104px;top:828px" width="18" height="18" viewBox="0 0 18 18"><path d="M3.2,3.2 14.8,14.8M14.8,3.2 3.2,14.8" stroke="#000" stroke-width="2.7" fill="none"/></svg>
<div class="cb" style="left:83.5px;top:848px;width:18px;height:18px"></div><svg class="a" style="left:83.5px;top:848px" width="18" height="18" viewBox="0 0 18 18"><path d="M3.2,3.2 14.8,14.8M14.8,3.2 3.2,14.8" stroke="#000" stroke-width="2.7" fill="none"/></svg>
<div class="inp" style="left:1381px;top:1349px;width:299px;height:24px"></div>
<div class="inp" style="left:1781px;top:1349px;width:117px;height:24px"></div>
<div class="a" style="left:1881px;top:1350px;width:16px;height:22px;background:linear-gradient(#f4f4f4,#dcdcdc);border-left:1px solid #c4c4c4;border-radius:0 2px 2px 0"></div>
<svg class="a" style="left:1884px;top:1358px" width="10" height="6"><path d="M1,1 9,1 5,5.5Z" fill="#111"/></svg>
<div class="inp" style="left:1987.5px;top:1349px;width:88px;height:24px"></div>
<div class="a" style="left:2059.5px;top:1350px;width:15px;height:22px;background:linear-gradient(#f6f6f6,#e2e2e2);border-left:1px solid #d0d0d0;border-radius:0 2px 2px 0"></div>
<svg class="a" style="left:2062.5px;top:1351px" width="10" height="20"><path d="M1.5,6.5 8.5,6.5 5,2.5Z M1.5,13.5 8.5,13.5 5,17.5Z" fill="#111"/></svg>
<div class="inp" style="left:2153px;top:1349px;width:88px;height:24px"></div>
<div class="a" style="left:2225px;top:1350px;width:15px;height:22px;background:linear-gradient(#f6f6f6,#e2e2e2);border-left:1px solid #d0d0d0;border-radius:0 2px 2px 0"></div>
<svg class="a" style="left:2228px;top:1351px" width="10" height="20"><path d="M1.5,6.5 8.5,6.5 5,2.5Z M1.5,13.5 8.5,13.5 5,17.5Z" fill="#111"/></svg>
<div class="cb" style="left:2248px;top:1351px;width:19px;height:19px"></div><svg class="a" style="left:2248px;top:1351px" width="19" height="19" viewBox="0 0 18 18"><path d="M3.2,3.2 14.8,14.8M14.8,3.2 3.2,14.8" stroke="#000" stroke-width="2.7" fill="none"/></svg>
<div class="a" style="left:341.5px;top:66px;width:33.30000000000001px;height:32.5px;background:#d8d8d8;border:1px solid #a3a3a3;border-radius:3px"></div>
<div class="a" style="left:1127.2px;top:66px;width:33.399999999999864px;height:32.5px;background:#d8d8d8;border:1px solid #a3a3a3;border-radius:3px"></div>
<svg class="a" style="left:16.75px;top:70px" width="24" height="24" viewBox="0 0 24 24"><path d="M4.5,1.2 H14.5 L19.5,6.2 V22.3 H4.5Z" fill="#fff" stroke="#333" stroke-width="1.3" stroke-linejoin="round"/><path d="M14.5,1.2 V6.2 H19.5" fill="#f4f4f4" stroke="#333" stroke-width="1.1" stroke-linejoin="round"/></svg>
<svg class="a" style="left:51.75px;top:70px" width="24" height="24" viewBox="0 0 24 24"><path d="M1.2,4 Q1.2,3 2.2,3 H7.5 L9.5,5.2 H19 Q20,5.2 20,6.2 V9 H1.2Z" fill="#f2c12e" stroke="#d9a91a" stroke-width="0.8"/><path d="M1.2,8 V20 Q1.2,21 2.2,21 H19.5 L23.2,9.5 Q23.4,8.6 22.4,8.6 H5 L1.2,20" fill="#ffd850" stroke="#e3b423" stroke-width="0.9" stroke-linejoin="round"/></svg>
<svg class="a" style="left:86.75px;top:70px" width="24" height="24" viewBox="0 0 24 24"><g transform="translate(2,0.2)"><path d="M1.5,0.5 H18.5 Q19.5,0.5 19.5,1.5 V19.5 Q19.5,20.5 18.5,20.5 H1.5 Q0.5,20.5 0.5,19.5 V1.5 Q0.5,0.5 1.5,0.5Z" fill="#5b8cc4" stroke="#3c6ea8" stroke-width="1.2"/><rect x="3.2" y="1.3" width="13.6" height="9" fill="#fff"/><path d="M5,3.6 H15 M5,5.8 H15 M5,8 H15" stroke="#444" stroke-width="1"/><rect x="4.6" y="13.6" width="10.8" height="6" fill="#fff"/><rect x="6.2" y="14.8" width="2.6" height="3.8" fill="#444"/></g></svg>
<svg class="a" style="left:122px;top:70px" width="24" height="24" viewBox="0 0 24 24"><g transform="translate(1.2,0.2)"><path d="M1.5,0.5 H18.5 Q19.5,0.5 19.5,1.5 V19.5 Q19.5,20.5 18.5,20.5 H1.5 Q0.5,20.5 0.5,19.5 V1.5 Q0.5,0.5 1.5,0.5Z" fill="#5b8cc4" stroke="#3c6ea8" stroke-width="1.2"/><rect x="3.2" y="1.3" width="13.6" height="9" fill="#fff"/><path d="M5,3.6 H15 M5,5.8 H15 M5,8 H15" stroke="#444" stroke-width="1"/><rect x="4.6" y="13.6" width="10.8" height="6" fill="#fff"/><rect x="6.2" y="14.8" width="2.6" height="3.8" fill="#444"/></g><g transform="translate(14,14)"><rect width="9.6" height="9.4" rx="1.6" fill="#5a9a4e" stroke="#3f7d38" stroke-width="0.7"/><path d="M2.4,7.2 L7.2,2.4" stroke="#fff" stroke-width="2.3" stroke-linecap="round"/></g></svg>
<svg class="a" style="left:156.75px;top:70px" width="24" height="24" viewBox="0 0 24 24"><path d="M0.8,0.9 H16.5 L21.6,5.5 V14.9 H0.8Z" fill="#fff" stroke="#444" stroke-width="1.2" stroke-linejoin="round"/><path d="M16.5,0.9 V5.5 H21.6" fill="none" stroke="#888" stroke-width="0.9"/><g transform="translate(13.2,12.6)"><rect width="10.8" height="10.8" rx="1.5" fill="#d6a700"/><circle cx="5.4" cy="5.4" r="2.2" fill="#fff"/><path d="M5.4,1 V9.8 M1,5.4 H9.8 M2.2,2.2 L8.600000000000001,8.600000000000001 M8.600000000000001,2.2 L2.2,8.600000000000001" stroke="#fff" stroke-width="1.1"/><circle cx="5.4" cy="5.4" r="1" fill="#d6a700"/></g></svg>
<svg class="a" style="left:191.75px;top:70px" width="24" height="24" viewBox="0 0 24 24"><path d="M0.8,0.9 H16.5 L21.6,5.5 V14.9 H0.8Z" fill="#fff" stroke="#444" stroke-width="1.2" stroke-linejoin="round"/><path d="M16.5,0.9 V5.5 H21.6" fill="none" stroke="#888" stroke-width="0.9"/><path d="M13.5,12.5 L22,21.8" stroke="#8a7a40" stroke-width="4.2" stroke-linecap="round"/><path d="M14,13 L21.8,21.5" stroke="#e6d48a" stroke-width="2.4" stroke-linecap="round"/><path d="M12.8,4.2 A4.6,4.6 0 1 0 15.8,12.4 L13.6,10.4 L11,10.8 L9.6,8.6 L10.6,6.2Z" fill="#d8d8d8" stroke="#777" stroke-width="1"/></svg>
<svg class="a" style="left:241.75px;top:70px" width="24" height="24" viewBox="0 0 24 24"><path d="M9.5,22 C8,19 5.5,16 3.2,13.8 C2.6,12.6 4,11.8 5,12.6 L8.4,15.4 L7,5.6 C6.8,3.8 9,3.6 9.4,5.2 L10.8,11 C11,9.6 13,9.8 13.2,11.2 C13.6,10 15.6,10.4 15.6,11.8 C16.2,10.8 18,11.4 18,12.8 L18.2,17.5 C18.2,19.5 17.4,20.6 17,22" fill="#fff" stroke="#555" stroke-width="1.1" stroke-linejoin="round"/><path d="M2.5,13.5 L4.5,10.5 M8.5,1.5 L10.8,0.8 M4.2,11.5 L7.8,3.2" stroke="#777" stroke-width="0.9" fill="none"/></svg>
<svg class="a" style="left:276.75px;top:70px" width="24" height="24" viewBox="0 0 24 24"><path d="M8.2,22.4 C6.5,19.5 4.2,16.6 2.6,14.2 C1.6,12.6 3.4,11.2 4.8,12.6 L7,15 V5 C7,3 9.6,3 9.6,5 V3 C9.6,0.8 12.4,0.8 12.4,3 V4 C12.4,2 15.2,2 15.2,4 V6 C15.2,4.2 17.8,4.2 17.8,6.2 V15 C17.8,18.5 16.8,20 16.2,22.4Z" fill="#fff" stroke="#111" stroke-width="1.4" stroke-linejoin="round"/><path d="M9.6,5 V11 M12.4,4 V11 M15.2,6 V11.5" stroke="#111" stroke-width="1.1"/></svg>
<svg class="a" style="left:310.5px;top:70px" width="24" height="24" viewBox="0 0 24 24"><rect x="2.6" y="2.6" width="13.2" height="13.2" fill="#ffe14a" stroke="#d8b800" stroke-width="0.9"/><g fill="#5b8cc4" stroke="#3c6ea8" stroke-width="0.8" stroke-linejoin="round"><path d="M12,0.8 L16.4,5.4 H13.8 V8.6 H10.2 V5.4 H7.6Z"/><path d="M12,23.2 L16.4,18.6 H13.8 V15.4 H10.2 V18.6 H7.6Z"/><path d="M0.8,12 L5.4,7.6 V10.2 H8.6 V13.8 H5.4 V16.4Z"/><path d="M23.2,12 L18.6,7.6 V10.2 H15.4 V13.8 H18.6 V16.4Z"/></g></svg>
<svg class="a" style="left:346px;top:70px" width="24" height="24" viewBox="0 0 24 24"><path d="M9.5,15.7 L1.6,23" stroke="#222" stroke-width="4.2" stroke-linecap="butt"/><path d="M7.9,17.2 L2.2,22.5" stroke="#ead56a" stroke-width="2.4"/><circle cx="15.2" cy="10.4" r="7.8" fill="#eef2f7" stroke="#666" stroke-width="1.5"/><path d="M15.2,5.6 V15.2 M10.4,10.4 H20" stroke="#5b8cc4" stroke-width="2.8"/></svg>
<svg class="a" style="left:380.5px;top:70px" width="24" height="24" viewBox="0 0 24 24"><path d="M9.6,15.0 L1.6,22.8" stroke="#222" stroke-width="4.2" stroke-linecap="butt"/><path d="M8.0,16.6 L2.2,22.2" stroke="#ead56a" stroke-width="2.4"/><circle cx="15.2" cy="9.6" r="7.8" fill="#eef2f7" stroke="#666" stroke-width="1.5"/><path d="M10.2,9.6 H20.2" stroke="#5b8cc4" stroke-width="2.8"/></svg>
<svg class="a" style="left:416.75px;top:70px" width="24" height="24" viewBox="0 0 24 24"><path d="M8.5,15.2 L1.2,22.6" stroke="#888" stroke-width="4.2" stroke-linecap="butt"/><path d="M7.0,16.7 L1.8,22.0" stroke="#e4e4e4" stroke-width="2.4"/><circle cx="14" cy="9.6" r="7.8" fill="#f4f4f4" stroke="#888" stroke-width="1.5"/><text x="14" y="13" font-family="Liberation Sans" font-weight="700" font-size="8.6" fill="#8c8c8c" text-anchor="middle" letter-spacing="-0.4">1:1</text></svg>
<svg class="a" style="left:451.5px;top:70px" width="24" height="24" viewBox="0 0 24 24"><g fill="#5b8cc4"><rect x="4" y="0.6" width="6.6" height="6.6"/><rect x="17" y="0.6" width="6.6" height="6.6"/><rect x="17" y="13.6" width="6.6" height="6.6"/></g><path d="M8.6,14.9 L1.4,22.8" stroke="#222" stroke-width="4.2" stroke-linecap="butt"/><path d="M7.1,16.6 L1.9,22.2" stroke="#ead56a" stroke-width="2.4"/><circle cx="13.4" cy="9.6" r="7.2" fill="#eef1f5" stroke="#666" stroke-width="1.5"/><g fill="#5b8cc4" stroke="#3c6ea8" stroke-width="0.5"><path d="M4.2,0.8 H10 L8,2.8 L10.6,5.4 L8.8,7.2 L6.2,4.6 L4.2,6.6Z"/><path d="M23.4,0.8 H17.6 L19.6,2.8 L17,5.4 L18.8,7.2 L21.4,4.6 L23.4,6.6Z"/><path d="M23.4,20 H17.6 L19.6,18 L17,15.4 L18.8,13.6 L21.4,16.2 L23.4,14.2Z"/></g></svg>
<svg class="a" style="left:485.5px;top:70px" width="24" height="24" viewBox="0 0 24 24"><rect x="2.6" y="2.6" width="9" height="12.6" fill="#ffe14a" stroke="#d8b800" stroke-width="0.9"/><path d="M9.8,14.5 L1.2,22.8" stroke="#222" stroke-width="4.2" stroke-linecap="butt"/><path d="M8.2,16.1 L1.8,22.2" stroke="#ead56a" stroke-width="2.4"/><circle cx="15.6" cy="9" r="8" fill="#f1efe4" stroke="#666" stroke-width="1.5"/><path d="M15.6,3.6 V14.4" stroke="#d4d0c0" stroke-width="1.4"/></svg>
<svg class="a" style="left:520.5px;top:70px" width="24" height="24" viewBox="0 0 24 24"><rect x="2.6" y="2.6" width="9" height="12.6" fill="#f4f4f4" stroke="#8a8a8a" stroke-width="0.9"/><path d="M9.8,14.5 L1.2,22.8" stroke="#222" stroke-width="4.2" stroke-linecap="butt"/><path d="M8.2,16.1 L1.8,22.2" stroke="#ead56a" stroke-width="2.4"/><circle cx="15.6" cy="9" r="8" fill="#f2f2f2" stroke="#666" stroke-width="1.5"/><path d="M15.6,3.6 V14.4" stroke="#cfcfcf" stroke-width="1.4"/></svg>
<svg class="a" style="left:555.5px;top:70px" width="24" height="24" viewBox="0 0 24 24"><path d="M8.5,14.7 L1.2,22.8" stroke="#222" stroke-width="4.2" stroke-linecap="butt"/><path d="M7.0,16.3 L1.7,22.2" stroke="#ead56a" stroke-width="2.4"/><circle cx="13.6" cy="9" r="7.6" fill="#f2f4f7" stroke="#8a8a8a" stroke-width="1.5"/><rect x="13.2" y="13.2" width="10.6" height="10.4" rx="1" fill="#5b8cc4" stroke="#3c6ea8" stroke-width="0.6"/><path d="M21.4,15.2 L16,18.4 L21.4,21.6" fill="none" stroke="#fff" stroke-width="2.2"/></svg>
<svg class="a" style="left:590.5px;top:70px" width="24" height="24" viewBox="0 0 24 24"><path d="M8.5,14.7 L1.2,22.8" stroke="#9a9a9a" stroke-width="4.2" stroke-linecap="butt"/><path d="M7.0,16.3 L1.7,22.2" stroke="#e6e6e6" stroke-width="2.4"/><circle cx="13.6" cy="9" r="7.6" fill="#f6f6f6" stroke="#b5b5b5" stroke-width="1.5"/><rect x="13.2" y="13.2" width="10.6" height="10.4" rx="1" fill="#b9b9b9"/><path d="M15.6,15.2 L21,18.4 L15.6,21.6" fill="none" stroke="#fff" stroke-width="2.2"/></svg>
<svg class="a" style="left:626.5px;top:70px" width="24" height="24" viewBox="0 0 24 24"><path d="M2.2,2 H20.6 V21.4 H4.6 Q2.2,21.4 2.2,19Z" fill="#e4e4e4" stroke="#9a9a9a" stroke-width="1"/><path d="M2.6,19 Q2.6,17 5.2,17 H20.2" fill="none" stroke="#9a9a9a" stroke-width="0.9"/><path d="M6,2.4 V17" stroke="#fafafa" stroke-width="2.2"/><path d="M13.4,1 H18.2 V9 L15.8,11 L13.4,9Z" fill="#5b8cc4" stroke="#3c6ea8" stroke-width="0.9"/><path d="M15.8,2.4 V8" stroke="#cfe0f2" stroke-width="1"/><g transform="translate(13.4,13.2)"><rect width="10.6" height="10.6" rx="1.5" fill="#d6a700"/><circle cx="5.3" cy="5.3" r="2.2" fill="#fff"/><path d="M5.3,1 V9.6 M1,5.3 H9.6 M2.2,2.2 L8.399999999999999,8.399999999999999 M8.399999999999999,2.2 L2.2,8.399999999999999" stroke="#fff" stroke-width="1.1"/><circle cx="5.3" cy="5.3" r="1" fill="#d6a700"/></g></svg>
<svg class="a" style="left:661px;top:70px" width="24" height="24" viewBox="0 0 24 24"><path d="M2.2,2 H20.6 V21.4 H4.6 Q2.2,21.4 2.2,19Z" fill="#e4e4e4" stroke="#9a9a9a" stroke-width="1"/><path d="M2.6,19 Q2.6,17 5.2,17 H20.2" fill="none" stroke="#9a9a9a" stroke-width="0.9"/><path d="M6,2.4 V17" stroke="#fafafa" stroke-width="2.2"/><path d="M13.4,1 H18.2 V9 L15.8,11 L13.4,9Z" fill="#5b8cc4" stroke="#3c6ea8" stroke-width="0.9"/><path d="M15.8,2.4 V8" stroke="#cfe0f2" stroke-width="1"/></svg>
<svg class="a" style="left:696px;top:70px" width="24" height="24" viewBox="0 0 24 24"><path d="M3,11 A9,8.6 0 0 1 18.6,5.4 L21.4,2.4 V10.6 H13.6 L16.2,7.8 A5.6,5.2 0 0 0 6.8,11Z" fill="#5b8cc4" stroke="#3c6ea8" stroke-width="0.7"/><path d="M21,13 A9,8.6 0 0 1 5.4,18.6 L2.6,21.6 V13.4 H10.4 L7.8,16.2 A5.6,5.2 0 0 0 17.2,13Z" fill="#4a80c0" stroke="#3c6ea8" stroke-width="0.7"/></svg>
<svg class="a" style="left:745px;top:70px" width="24" height="24" viewBox="0 0 24 24"><circle cx="9" cy="8.8" r="8.2" fill="#5b8cc4" stroke="#6a98cc" stroke-width="0.8"/><text x="9.2" y="14" font-family="Liberation Serif" font-style="italic" font-weight="700" font-size="15" fill="#fff" text-anchor="middle">i</text><path transform="translate(12,10.6) scale(1.05)" d="M0,0 L0,10.6 L2.6,8.2 L4.6,12.6 L6.6,11.6 L4.6,7.4 L8.2,7.2Z" fill="#fff" stroke="#555" stroke-width="1" stroke-linejoin="round"/></svg>
<svg class="a" style="left:779px;top:70px" width="24" height="24" viewBox="0 0 24 24"><circle cx="9.6" cy="9.4" r="7.4" fill="#e2e2e2" stroke="#adadad" stroke-width="2.4" stroke-dasharray="3.4 2.2"/><circle cx="9.6" cy="9.4" r="5.4" fill="#ededed" stroke="#b0b0b0" stroke-width="0.9"/><circle cx="9.6" cy="9.4" r="3.6" fill="#bdbdbd"/><path d="M8.4,7.2 L12,9.4 L8.4,11.6Z" fill="#fff"/><path transform="translate(13,11) scale(1.0)" d="M0,0 L0,10.6 L2.6,8.2 L4.6,12.6 L6.6,11.6 L4.6,7.4 L8.2,7.2Z" fill="#f2f2f2" stroke="#a8a8a8" stroke-width="1" stroke-linejoin="round"/></svg>
<svg class="a" style="left:833.5px;top:70px" width="24" height="24" viewBox="0 0 24 24"><rect x="2" y="1.6" width="20.6" height="18.4" fill="none" stroke="#222" stroke-width="1.1" stroke-dasharray="2.2 1.6"/><rect x="2.8" y="2.4" width="13" height="13.2" fill="#ffe14a" stroke="#d8b800" stroke-width="0.8"/><path transform="translate(11.6,9.6) scale(1.1)" d="M0,0 L0,10.6 L2.6,8.2 L4.6,12.6 L6.6,11.6 L4.6,7.4 L8.2,7.2Z" fill="#fff" stroke="#555" stroke-width="1" stroke-linejoin="round"/></svg>
<svg class="a" style="left:886.5px;top:70px" width="24" height="24" viewBox="0 0 24 24"><rect x="8.4" y="7.6" width="14" height="14.2" fill="#ffe14a" stroke="#d1b000" stroke-width="0.9"/><text x="2" y="15.4" font-family="Liberation Serif" font-size="23" fill="#5b2a86">ε</text></svg>
<svg class="a" style="left:940px;top:70px" width="24" height="24" viewBox="0 0 24 24"><rect x="2.4" y="1.8" width="13.4" height="13.4" fill="#ffe14a" stroke="#d1b000" stroke-width="0.9"/><rect x="13.4" y="12.8" width="10.2" height="10.4" rx="1.8" fill="#d81e2c" stroke="#a80e1a" stroke-width="0.7"/><circle cx="18.5" cy="18" r="3.1" fill="none" stroke="#fff" stroke-width="1.4"/><path d="M16.4,20.2 L20.6,15.8" stroke="#fff" stroke-width="1.4"/></svg>
<svg class="a" style="left:974px;top:70px" width="24" height="24" viewBox="0 0 24 24"><rect x="2.6" y="1.8" width="19.2" height="19.4" fill="#ddeaf8" stroke="#6e9ed2" stroke-width="1"/><rect x="3.2" y="2.4" width="18" height="3.4" fill="#a9c7ea"/><path d="M5,4.1 H9.4 M11,4.1 H19.6" stroke="#4f82bd" stroke-width="1.4"/><path d="M5,8.8 H9.4 M11,8.8 H19.6 M5,12.2 H9.4 M11,12.2 H19.6 M5,15.6 H9.4 M11,15.6 H19.6 M5,18.8 H9.4 M11,18.8 H19.6" stroke="#7eaadb" stroke-width="1.2"/></svg>
<svg class="a" style="left:1008.5px;top:70px" width="24" height="24" viewBox="0 0 24 24"><path d="M2.4,1.4 V21 M21.6,1.4 V21 M2.4,3.8 H21.6 M2.4,10 H21.6 M2.4,16 H21.6" stroke="#555" stroke-width="1.1" fill="none"/><rect x="1" y="20.2" width="22" height="2.4" fill="#aaa" stroke="#555" stroke-width="0.8"/><path d="M8.4,1.4 L11.0,3.8 L8.4,6.199999999999999 L5.800000000000001,3.8Z" fill="#f7b6b6" stroke="#d33" stroke-width="0.8"/><path d="M16.2,1.4 L18.8,3.8 L16.2,6.199999999999999 L13.6,3.8Z" fill="#f7b6b6" stroke="#d33" stroke-width="0.8"/><path d="M6.8,7.6 L9.4,10 L6.8,12.4 L4.199999999999999,10Z" fill="#bfe3b4" stroke="#4a9a3a" stroke-width="0.8"/><path d="M11.2,7.6 L13.799999999999999,10 L11.2,12.4 L8.6,10Z" fill="#bfe3b4" stroke="#4a9a3a" stroke-width="0.8"/><path d="M15.6,7.6 L18.2,10 L15.6,12.4 L13.0,10Z" fill="#bfe3b4" stroke="#4a9a3a" stroke-width="0.8"/><path d="M6.8,13.6 L9.4,16 L6.8,18.4 L4.199999999999999,16Z" fill="#c4d8f0" stroke="#4a78b8" stroke-width="0.8"/><path d="M11.2,13.6 L13.799999999999999,16 L11.2,18.4 L8.6,16Z" fill="#c4d8f0" stroke="#4a78b8" stroke-width="0.8"/><path d="M15.6,13.6 L18.2,16 L15.6,18.4 L13.0,16Z" fill="#c4d8f0" stroke="#4a78b8" stroke-width="0.8"/></svg>
<svg class="a" style="left:1043.5px;top:70px" width="24" height="24" viewBox="0 0 24 24"><path d="M4.6,1.8 H18.8 L19.4,7 H18.2 Q17.6,3.6 14.6,3.6 H9 L14.6,11 L8.2,19 H15.4 Q18.6,19 19.2,15.6 H20.4 L19.4,21.6 H4.2 V20.6 L11,12 L4.6,3Z" fill="#8b1a8b"/></svg>
<svg class="a" style="left:1078.5px;top:70px" width="24" height="24" viewBox="0 0 24 24"><path d="M3.4,6.4 H20.8 M3.4,4.4 V8.4 M20.8,4.4 V8.4" stroke="#3a4450" stroke-width="1.3" fill="none"/><rect x="2" y="12" width="21.4" height="7.2" rx="0.8" fill="#c9c9c9" stroke="#767676" stroke-width="1"/><path d="M5,12.4 V15.6 M8,12.4 V14.6 M11,12.4 V15.6 M14,12.4 V14.6 M17,12.4 V15.6 M20,12.4 V14.6" stroke="#666" stroke-width="1"/></svg>
<svg class="a" style="left:1132.5px;top:70px" width="24" height="24" viewBox="0 0 24 24"><path d="M4.2,2.6 H19.6 Q22.8,2.6 22.8,5.8 V11.4 Q22.8,14.6 19.6,14.6 H11.6 L7.4,18.6 L8.6,14.6 H4.2 Q1,14.6 1,11.4 V5.8 Q1,2.6 4.2,2.6Z" fill="#fdec84" stroke="#c8b23c" stroke-width="1"/><circle cx="5.6" cy="20" r="3.6" fill="#7fae6a" stroke="#4f8442" stroke-width="1"/></svg>
<svg class="a" style="left:1167px;top:70px" width="24" height="24" viewBox="0 0 24 24"><path d="M1.8,1.6 H22.8 V15.8 H10 L2,21.6 L6,15.8 H1.8Z" fill="#eef2f4" stroke="#8a8a8a" stroke-width="1"/><text x="12.4" y="13.4" font-family="Liberation Serif" font-size="14.5" fill="#333" text-anchor="middle">T</text></svg>
<svg class="a" style="left:1234px;top:70px" width="24" height="24" viewBox="0 0 24 24"><rect x="2.2" y="1.4" width="19.8" height="20.8" fill="#5b86b8" stroke="#2a3d56" stroke-width="0.6"/><rect x="2.2" y="1.4" width="5" height="20.8" fill="#26354a"/><text x="14.6" y="17" font-family="Liberation Sans" font-size="14" fill="#fff" text-anchor="middle">?</text></svg>
<svg class="a" style="left:811px;top:77.55px" width="13" height="7.5" viewBox="0 0 13 7.5"><path d="M0,0 H13 L6.5,7.5Z" fill="#a8a8a8"/></svg>
<svg class="a" style="left:863.8px;top:77.55px" width="13" height="7.5" viewBox="0 0 13 7.5"><path d="M0,0 H13 L6.5,7.5Z" fill="#000"/></svg>
<svg class="a" style="left:917.5px;top:77.55px" width="13" height="7.5" viewBox="0 0 13 7.5"><path d="M0,0 H13 L6.5,7.5Z" fill="#000"/></svg>
<svg class="a" style="left:1109.8px;top:77.55px" width="13" height="7.5" viewBox="0 0 13 7.5"><path d="M0,0 H13 L6.5,7.5Z" fill="#000"/></svg>
<svg class="a" style="left:1198px;top:77.55px" width="13" height="7.5" viewBox="0 0 13 7.5"><path d="M0,0 H13 L6.5,7.5Z" fill="#000"/></svg>
<svg class="a" style="left:5.6px;top:67px" width="7" height="32"><rect x="0.6" y="0" width="1.8" height="1.8" fill="#c2c2c2"/><rect x="1.7" y="1.1" width="1.5" height="1.5" fill="#fdfdfd"/><rect x="3.7" y="3" width="1.8" height="1.8" fill="#c2c2c2"/><rect x="4.8" y="4.1" width="1.5" height="1.5" fill="#fdfdfd"/><rect x="0.6" y="6" width="1.8" height="1.8" fill="#c2c2c2"/><rect x="1.7" y="7.1" width="1.5" height="1.5" fill="#fdfdfd"/><rect x="3.7" y="9" width="1.8" height="1.8" fill="#c2c2c2"/><rect x="4.8" y="10.1" width="1.5" height="1.5" fill="#fdfdfd"/><rect x="0.6" y="12" width="1.8" height="1.8" fill="#c2c2c2"/><rect x="1.7" y="13.1" width="1.5" height="1.5" fill="#fdfdfd"/><rect x="3.7" y="15" width="1.8" height="1.8" fill="#c2c2c2"/><rect x="4.8" y="16.1" width="1.5" height="1.5" fill="#fdfdfd"/><rect x="0.6" y="18" width="1.8" height="1.8" fill="#c2c2c2"/><rect x="1.7" y="19.1" width="1.5" height="1.5" fill="#fdfdfd"/><rect x="3.7" y="21" width="1.8" height="1.8" fill="#c2c2c2"/><rect x="4.8" y="22.1" width="1.5" height="1.5" fill="#fdfdfd"/><rect x="0.6" y="24" width="1.8" height="1.8" fill="#c2c2c2"/><rect x="1.7" y="25.1" width="1.5" height="1.5" fill="#fdfdfd"/><rect x="3.7" y="27" width="1.8" height="1.8" fill="#c2c2c2"/><rect x="4.8" y="28.1" width="1.5" height="1.5" fill="#fdfdfd"/></svg>
<svg class="a" style="left:230.6px;top:67px" width="7" height="32"><rect x="0.6" y="0" width="1.8" height="1.8" fill="#c2c2c2"/><rect x="1.7" y="1.1" width="1.5" height="1.5" fill="#fdfdfd"/><rect x="3.7" y="3" width="1.8" height="1.8" fill="#c2c2c2"/><rect x="4.8" y="4.1" width="1.5" height="1.5" fill="#fdfdfd"/><rect x="0.6" y="6" width="1.8" height="1.8" fill="#c2c2c2"/><rect x="1.7" y="7.1" width="1.5" height="1.5" fill="#fdfdfd"/><rect x="3.7" y="9" width="1.8" height="1.8" fill="#c2c2c2"/><rect x="4.8" y="10.1" width="1.5" height="1.5" fill="#fdfdfd"/><rect x="0.6" y="12" width="1.8" height="1.8" fill="#c2c2c2"/><rect x="1.7" y="13.1" width="1.5" height="1.5" fill="#fdfdfd"/><rect x="3.7" y="15" width="1.8" height="1.8" fill="#c2c2c2"/><rect x="4.8" y="16.1" width="1.5" height="1.5" fill="#fdfdfd"/><rect x="0.6" y="18" width="1.8" height="1.8" fill="#c2c2c2"/><rect x="1.7" y="19.1" width="1.5" height="1.5" fill="#fdfdfd"/><rect x="3.7" y="21" width="1.8" height="1.8" fill="#c2c2c2"/><rect x="4.8" y="22.1" width="1.5" height="1.5" fill="#fdfdfd"/><rect x="0.6" y="24" width="1.8" height="1.8" fill="#c2c2c2"/><rect x="1.7" y="25.1" width="1.5" height="1.5" fill="#fdfdfd"/><rect x="3.7" y="27" width="1.8" height="1.8" fill="#c2c2c2"/><rect x="4.8" y="28.1" width="1.5" height="1.5" fill="#fdfdfd"/></svg>
<svg class="a" style="left:735px;top:67px" width="7" height="32"><rect x="0.6" y="0" width="1.8" height="1.8" fill="#c2c2c2"/><rect x="1.7" y="1.1" width="1.5" height="1.5" fill="#fdfdfd"/><rect x="3.7" y="3" width="1.8" height="1.8" fill="#c2c2c2"/><rect x="4.8" y="4.1" width="1.5" height="1.5" fill="#fdfdfd"/><rect x="0.6" y="6" width="1.8" height="1.8" fill="#c2c2c2"/><rect x="1.7" y="7.1" width="1.5" height="1.5" fill="#fdfdfd"/><rect x="3.7" y="9" width="1.8" height="1.8" fill="#c2c2c2"/><rect x="4.8" y="10.1" width="1.5" height="1.5" fill="#fdfdfd"/><rect x="0.6" y="12" width="1.8" height="1.8" fill="#c2c2c2"/><rect x="1.7" y="13.1" width="1.5" height="1.5" fill="#fdfdfd"/><rect x="3.7" y="15" width="1.8" height="1.8" fill="#c2c2c2"/><rect x="4.8" y="16.1" width="1.5" height="1.5" fill="#fdfdfd"/><rect x="0.6" y="18" width="1.8" height="1.8" fill="#c2c2c2"/><rect x="1.7" y="19.1" width="1.5" height="1.5" fill="#fdfdfd"/><rect x="3.7" y="21" width="1.8" height="1.8" fill="#c2c2c2"/><rect x="4.8" y="22.1" width="1.5" height="1.5" fill="#fdfdfd"/><rect x="0.6" y="24" width="1.8" height="1.8" fill="#c2c2c2"/><rect x="1.7" y="25.1" width="1.5" height="1.5" fill="#fdfdfd"/><rect x="3.7" y="27" width="1.8" height="1.8" fill="#c2c2c2"/><rect x="4.8" y="28.1" width="1.5" height="1.5" fill="#fdfdfd"/></svg>
<svg class="a" style="left:1223.2px;top:67px" width="7" height="32"><rect x="0.6" y="0" width="1.8" height="1.8" fill="#c2c2c2"/><rect x="1.7" y="1.1" width="1.5" height="1.5" fill="#fdfdfd"/><rect x="3.7" y="3" width="1.8" height="1.8" fill="#c2c2c2"/><rect x="4.8" y="4.1" width="1.5" height="1.5" fill="#fdfdfd"/><rect x="0.6" y="6" width="1.8" height="1.8" fill="#c2c2c2"/><rect x="1.7" y="7.1" width="1.5" height="1.5" fill="#fdfdfd"/><rect x="3.7" y="9" width="1.8" height="1.8" fill="#c2c2c2"/><rect x="4.8" y="10.1" width="1.5" height="1.5" fill="#fdfdfd"/><rect x="0.6" y="12" width="1.8" height="1.8" fill="#c2c2c2"/><rect x="1.7" y="13.1" width="1.5" height="1.5" fill="#fdfdfd"/><rect x="3.7" y="15" width="1.8" height="1.8" fill="#c2c2c2"/><rect x="4.8" y="16.1" width="1.5" height="1.5" fill="#fdfdfd"/><rect x="0.6" y="18" width="1.8" height="1.8" fill="#c2c2c2"/><rect x="1.7" y="19.1" width="1.5" height="1.5" fill="#fdfdfd"/><rect x="3.7" y="21" width="1.8" height="1.8" fill="#c2c2c2"/><rect x="4.8" y="22.1" width="1.5" height="1.5" fill="#fdfdfd"/><rect x="0.6" y="24" width="1.8" height="1.8" fill="#c2c2c2"/><rect x="1.7" y="25.1" width="1.5" height="1.5" fill="#fdfdfd"/><rect x="3.7" y="27" width="1.8" height="1.8" fill="#c2c2c2"/><rect x="4.8" y="28.1" width="1.5" height="1.5" fill="#fdfdfd"/></svg>
<svg class="a" style="left:18.5px;top:109.5px" width="24" height="24" viewBox="0 0 24 24"><g stroke-linejoin="round"><path d="M1.4,21.6 L3,16 L13,0.6 L16.6,3 L6.4,18.6Z" fill="#c4c4c4" stroke="#9a9a9a" stroke-width="0.9"/><path d="M5.4,22.4 L7,16.8 L17,1.4 L20.6,3.8 L10.4,19.4Z" fill="#b4b4b4" stroke="#909090" stroke-width="0.9"/><path d="M1.4,21.6 L3,16 L6.4,18.6Z M5.4,22.4 L7,16.8 L10.4,19.4Z" fill="#8e8e8e"/></g><path d="M14.6,17.6 H23.6 L19.1,22.6Z" fill="#9a9a9a"/></svg>
<svg class="a" style="left:51px;top:109.5px" width="24" height="24" viewBox="0 0 24 24"><path d="M4.2,22.8 L6,16.4 L16.4,0.8 L20.4,3.4 L10,19.2Z" fill="#d2d2d2" stroke="#a2a2a2" stroke-width="1" stroke-linejoin="round"/><path d="M4.2,22.8 L6,16.4 L10,19.2Z" fill="#8e8e8e"/><path d="M8,17.6 L18.2,2.2" stroke="#f2f2f2" stroke-width="1.2"/></svg>
<svg class="a" style="left:86.75px;top:109.5px" width="24" height="24" viewBox="0 0 24 24"><g transform="translate(1.4,1)"><path d="M1.5,0.5 H18.5 Q19.5,0.5 19.5,1.5 V19.5 Q19.5,20.5 18.5,20.5 H1.5 Q0.5,20.5 0.5,19.5 V1.5 Q0.5,0.5 1.5,0.5Z" fill="#b0b0b0" stroke="#9a9a9a" stroke-width="1.2"/><rect x="3.2" y="1.3" width="13.6" height="9" fill="#fff"/><path d="M5,3.6 H15 M5,5.8 H15 M5,8 H15" stroke="#aaa" stroke-width="1"/><rect x="4.6" y="13.6" width="10.8" height="6" fill="#fff"/><rect x="6.2" y="14.8" width="2.6" height="3.8" fill="#aaa"/></g><path d="M13.4,22.6 L14.4,18.6 L20.4,9.6 L23.2,11.4 L17.2,20.4Z" fill="#bdbdbd" stroke="#8e8e8e" stroke-width="0.9" stroke-linejoin="round"/></svg>
<svg class="a" style="left:122px;top:109.5px" width="24" height="24" viewBox="0 0 24 24"><circle cx="11" cy="3.2" r="2.7" fill="#bdbdbd" stroke="#a4a4a4" stroke-width="0.8"/><circle cx="20" cy="5" r="2.7" fill="#bdbdbd" stroke="#a4a4a4" stroke-width="0.8"/><circle cx="4" cy="11" r="2.7" fill="#bdbdbd" stroke="#a4a4a4" stroke-width="0.8"/><rect x="13" y="12.6" width="10.6" height="10.6" rx="1.6" fill="#a9a9a9" stroke="#939393" stroke-width="0.6"/><g transform="translate(13,12.6)"><circle cx="5.3" cy="5.3" r="2.2" fill="#fff"/><path d="M5.3,1.2 V9.4 M1.2,5.3 H9.4 M2.4,2.4 L8.2,8.2 M8.2,2.4 L2.4,8.2" stroke="#fff" stroke-width="1.1"/><circle cx="5.3" cy="5.3" r="1" fill="#a9a9a9"/></g></svg>
<svg class="a" style="left:156.75px;top:109.5px" width="24" height="24" viewBox="0 0 24 24"><path d="M3.6,19.4 Q4.6,8 7.6,7 Q11,4.6 18.4,3.4" fill="none" stroke="#a8a8a8" stroke-width="1"/><rect x="5.699999999999999" y="5.1" width="3.8" height="3.8" fill="#e6e6e6" stroke="#a0a0a0" stroke-width="0.9"/><rect x="17.1" y="1.5" width="3.8" height="3.8" fill="#e6e6e6" stroke="#a0a0a0" stroke-width="0.9"/><rect x="1.7000000000000002" y="17.700000000000003" width="3.8" height="3.8" fill="#e6e6e6" stroke="#a0a0a0" stroke-width="0.9"/><rect x="13" y="12.6" width="10.6" height="10.6" rx="1.6" fill="#a9a9a9" stroke="#939393" stroke-width="0.6"/><g transform="translate(13,12.6)"><circle cx="5.3" cy="5.3" r="2.2" fill="#fff"/><path d="M5.3,1.2 V9.4 M1.2,5.3 H9.4 M2.4,2.4 L8.2,8.2 M8.2,2.4 L2.4,8.2" stroke="#fff" stroke-width="1.1"/><circle cx="5.3" cy="5.3" r="1" fill="#a9a9a9"/></g></svg>
<svg class="a" style="left:210.5px;top:109.5px" width="24" height="24" viewBox="0 0 24 24"><circle cx="11" cy="3.2" r="2.7" fill="#bdbdbd" stroke="#a4a4a4" stroke-width="0.8"/><circle cx="20" cy="5" r="2.7" fill="#bdbdbd" stroke="#a4a4a4" stroke-width="0.8"/><circle cx="4" cy="11" r="2.7" fill="#bdbdbd" stroke="#a4a4a4" stroke-width="0.8"/><rect x="13" y="12.6" width="10.6" height="10.6" rx="1.6" fill="#707070" stroke="#939393" stroke-width="0.6"/><path d="M14.6,16.6 H18.6 V14.4 L22.6,17.9 L18.6,21.4 V19.2 H14.6Z" fill="#fff"/></svg>
<svg class="a" style="left:245.5px;top:109.5px" width="24" height="24" viewBox="0 0 24 24"><rect x="3.4" y="1.6" width="4.2" height="4.2" fill="#f2f2f2" stroke="#909090" stroke-width="0.9"/><circle cx="5.5" cy="3.7" r="0.9" fill="#b44"/><path d="M8,3.7 H18.6" stroke="#b0b0b0" stroke-width="1.2"/><path d="M4.8,6.4 L1.4,19.6" stroke="#a4a4a4" stroke-width="1"/><path d="M8,20.4 L19.4,8.2 M10.6,9.6 L20.4,19.8" stroke="#b2b2b2" stroke-width="2.6" stroke-linecap="round"/><path d="M9,16 L14,11" stroke="#cfcfcf" stroke-width="3.4" stroke-linecap="round"/></svg>
<svg class="a" style="left:279.5px;top:109.5px" width="24" height="24" viewBox="0 0 24 24"><path d="M2,4.4 H22 M8.4,4.2 Q8.4,1.4 12,1.4 Q15.6,1.4 15.6,4.2" fill="none" stroke="#555" stroke-width="1.6"/><path d="M3.8,6.4 H20.2 V20.8 Q20.2,21.8 19.2,21.8 H4.8 Q3.8,21.8 3.8,20.8Z" fill="#e0e0e0" stroke="#555" stroke-width="1.5"/><path d="M8,8.6 V19.4 M12,8.6 V19.4 M16,8.6 V19.4" stroke="#666" stroke-width="1.5"/></svg>
<svg class="a" style="left:314.5px;top:109.5px" width="24" height="24" viewBox="0 0 24 24"><path d="M1.6,4 L17,13.4 M2.4,10.8 L17,8.4" stroke="#c2c2c2" stroke-width="2" stroke-linecap="round"/><ellipse cx="19.8" cy="7.2" rx="2.6" ry="3" fill="none" stroke="#a0a0a0" stroke-width="1.5" transform="rotate(25 19.8 7.2)"/><ellipse cx="19" cy="15.6" rx="2.4" ry="3" fill="none" stroke="#a0a0a0" stroke-width="1.5" transform="rotate(-30 19 15.6)"/></svg>
<svg class="a" style="left:349px;top:109.5px" width="24" height="24" viewBox="0 0 24 24"><path d="M8,1.4 H15 L19,5.4 V16.4 H8Z" fill="#f6f6f6" stroke="#a8a8a8" stroke-width="1" stroke-linejoin="round"/><path d="M10,8.15 H16.6" stroke="#c2c2c2" stroke-width="0.9"/><path d="M10,10.4 H16.6" stroke="#c2c2c2" stroke-width="0.9"/><path d="M10,12.65 H16.6" stroke="#c2c2c2" stroke-width="0.9"/><path d="M10,14.9 H16.6" stroke="#c2c2c2" stroke-width="0.9"/><path d="M4,5.4 H11.6 L15.6,9.4 V22.0 H4Z" fill="#f6f6f6" stroke="#a8a8a8" stroke-width="1" stroke-linejoin="round"/><path d="M6,12.870000000000001 H13.2" stroke="#c2c2c2" stroke-width="0.9"/><path d="M6,15.360000000000001 H13.2" stroke="#c2c2c2" stroke-width="0.9"/><path d="M6,17.85 H13.2" stroke="#c2c2c2" stroke-width="0.9"/><path d="M6,20.340000000000003 H13.2" stroke="#c2c2c2" stroke-width="0.9"/></svg>
<svg class="a" style="left:384.5px;top:109.5px" width="24" height="24" viewBox="0 0 24 24"><rect x="4" y="2.4" width="15.6" height="19.6" fill="#e2e2e2" stroke="#a4a4a4" stroke-width="1"/><rect x="8" y="0.8" width="7.6" height="3.6" fill="#cfcfcf" stroke="#a4a4a4" stroke-width="0.8"/><path d="M6.4,5.6 H14.0 L18.0,9.6 V20.0 H6.4Z" fill="#f6f6f6" stroke="#a8a8a8" stroke-width="1" stroke-linejoin="round"/><path d="M8.4,12.08 H15.6" stroke="#c2c2c2" stroke-width="0.9"/><path d="M8.4,14.24 H15.6" stroke="#c2c2c2" stroke-width="0.9"/><path d="M8.4,16.4 H15.6" stroke="#c2c2c2" stroke-width="0.9"/><path d="M8.4,18.560000000000002 H15.6" stroke="#c2c2c2" stroke-width="0.9"/></svg>
<svg class="a" style="left:432.8px;top:109.5px" width="24" height="24" viewBox="0 0 24 24"><path d="M0.8,7.8 L4.8,2.6 H21.6 V13 H4.8Z" fill="#ffe14a" stroke="#c8a400" stroke-width="0.9" stroke-linejoin="round"/><text x="13.2" y="10.9" font-family="Liberation Sans" font-weight="700" font-size="9.6" fill="#2a2a2a" text-anchor="middle">abc</text></svg>
<svg class="a" style="left:468.8px;top:109.5px" width="24" height="24" viewBox="0 0 24 24"><circle cx="12.2" cy="13" r="11.4" fill="#fff"/><path d="M12.2,12 L5.6,5 A10.8,10.8 0 0 1 18.8,5Z" fill="#e8171c" stroke="#b30f12" stroke-width="0.7" transform="translate(0,-1.6)"/><path d="M11.2,13.6 V24 A11,11 0 0 1 3.8,6.2Z" fill="#76c52a" stroke="#4f9a14" stroke-width="0.7"/><path d="M13.2,13.6 V24 A11,11 0 0 0 20.6,6.2Z" fill="#ffe02e" stroke="#d0a800" stroke-width="0.7"/></svg>
<svg class="a" style="left:504px;top:109.5px" width="24" height="24" viewBox="0 0 24 24"><rect x="0.8" y="1.4" width="22.6" height="19" fill="#eef3fa" stroke="#2d6fc4" stroke-width="1.1"/><path d="M1,7.4 L4.6,2.6 H20.2 V11.8 H4.6Z" fill="#ffe14a" stroke="#c8a400" stroke-width="0.8"/><text x="10.6" y="10.2" font-family="Liberation Sans" font-weight="700" font-size="9.4" fill="#2a2a2a" text-anchor="middle">ab</text><path d="M17.6,6 V13" stroke="#f4f4f4" stroke-width="1.6"/><circle cx="19" cy="17" r="4.5" fill="#b81420" stroke="#8a0c14" stroke-width="0.6"/><circle cx="17.8" cy="15.6" r="1.2" fill="#e46a72"/></svg>
<svg class="a" style="left:539px;top:109.5px" width="24" height="24" viewBox="0 0 24 24"><path d="M0.8,6.6 L5,1.8 H18 V11.4 H5Z" fill="#dedede" stroke="#b4b4b4" stroke-width="0.9" stroke-linejoin="round"/><text x="11.5" y="9.6" font-family="Liberation Sans" font-weight="700" font-size="9" fill="#9a9a9a" text-anchor="middle">ab</text><path d="M16.4,4.4 V12" stroke="#f4f4f4" stroke-width="1.6"/><circle cx="17.4" cy="16.4" r="4.4" fill="#9a9a9a"/></svg>
<svg class="a" style="left:574px;top:109.5px" width="24" height="24" viewBox="0 0 24 24"><path d="M0.8,6.6 L5,1.8 H19 V11.4 H5Z" fill="#dedede" stroke="#b4b4b4" stroke-width="0.9" stroke-linejoin="round"/><text x="12.0" y="9.6" font-family="Liberation Sans" font-weight="700" font-size="9" fill="#9a9a9a" text-anchor="middle">abc</text><path d="M8,18 Q14.6,11.6 22.2,18 Q14.6,23.4 8,18Z" fill="#f2f2f2" stroke="#9a9a9a" stroke-width="0.9"/><circle cx="15" cy="17.8" r="2.6" fill="#8a8a8a"/><path d="M9,14.4 Q15,10.6 21.6,14.2" fill="none" stroke="#b0b0b0" stroke-width="0.9"/></svg>
<svg class="a" style="left:609px;top:109.5px" width="24" height="24" viewBox="0 0 24 24"><path d="M0.8,6.6 L5,1.8 H19 V11.4 H5Z" fill="#dedede" stroke="#b4b4b4" stroke-width="0.9" stroke-linejoin="round"/><text x="12.0" y="9.6" font-family="Liberation Sans" font-weight="700" font-size="9" fill="#9a9a9a" text-anchor="middle">abc</text><rect x="13.2" y="11.8" width="10.8" height="10.8" rx="1.6" fill="#8e8e8e" stroke="#939393" stroke-width="0.6"/><path d="M14.8,16 H18.6 V13.8 L22.6,17.2 L18.6,20.6 V18.4 H14.8Z" fill="#fff"/></svg>
<svg class="a" style="left:644px;top:109.5px" width="24" height="24" viewBox="0 0 24 24"><path d="M0.8,6.6 L5,1.8 H19 V11.4 H5Z" fill="#dedede" stroke="#b4b4b4" stroke-width="0.9" stroke-linejoin="round"/><text x="12.0" y="9.6" font-family="Liberation Sans" font-weight="700" font-size="9" fill="#9a9a9a" text-anchor="middle">abc</text><rect x="13.2" y="11.8" width="10.8" height="10.8" rx="1.6" fill="#a2a2a2" stroke="#939393" stroke-width="0.6"/><path d="M21.4,17.4 A2.9,2.9 0 1 1 18.4,14.4" fill="none" stroke="#fff" stroke-width="1.6"/><path d="M17.6,12.6 L20.6,14.6 L17.6,16.6Z" fill="#fff"/></svg>
<svg class="a" style="left:679px;top:109.5px" width="24" height="24" viewBox="0 0 24 24"><path d="M0.8,6.6 L5,1.8 H19 V11.4 H5Z" fill="#dedede" stroke="#b4b4b4" stroke-width="0.9" stroke-linejoin="round"/><text x="12.0" y="9.6" font-family="Liberation Sans" font-weight="700" font-size="9" fill="#9a9a9a" text-anchor="middle">abc</text><rect x="13.2" y="11.8" width="10.8" height="10.8" rx="1.6" fill="#bdbdbd" stroke="#939393" stroke-width="0.6"/><path d="M15.4,20.6 L16,18.4 L20.6,13.8 L22.2,15.4 L17.6,20Z" fill="#fff"/></svg>
<svg class="a" style="left:728px;top:109.5px" width="24" height="24" viewBox="0 0 24 24"><circle cx="12" cy="12" r="11" fill="#a5d48c" stroke="#1f9a3e" stroke-width="1.9"/><path d="M3.2,9.6 Q3.2,4.2 9.6,2.4 Q12.6,1.8 14.6,2.6 L11.8,6.6 L9.6,5.6 L6.4,11.4 Q4.4,12 3.2,9.6Z" fill="#138a34"/><path d="M13.8,3.2 L15.4,6 L16.4,4.2Z" fill="#138a34"/><path d="M5.6,18.6 Q12,23 18.8,18.4" fill="none" stroke="#8cc474" stroke-width="1.4"/></svg>
<svg class="a" style="left:763.5px;top:109.5px" width="24" height="24" viewBox="0 0 24 24"><rect x="1.4" y="2.6" width="21.2" height="18.4" fill="#cfcfcf"/><rect x="2.6" y="1.4" width="20.6" height="17.6" fill="#fff" stroke="#c6c6c6" stroke-width="0.8"/><text x="12.8" y="14" font-family="Liberation Mono" font-size="10.6" fill="#444" text-anchor="middle" letter-spacing="0.2">CSW</text></svg>
<svg class="a" style="left:812px;top:109.5px" width="24" height="24" viewBox="0 0 24 24"><path d="M11,1 Q6.4,1 6.4,4.6 V7.2 H11.8 V8.2 H4.2 Q1,8.2 1,12 Q1,16 4.2,16 H6.2 V13 Q6.2,10.4 9,10.4 H14 Q16.6,10.4 16.6,7.8 V4.6 Q16.6,1 11,1Z" fill="#3d7ab4"/><circle cx="8.8" cy="4" r="1.1" fill="#fff"/><path d="M13,23 Q17.6,23 17.6,19.4 V16.8 H12.2 V15.8 H19.8 Q23,15.8 23,12 Q23,8 19.8,8 H17.8 V11 Q17.8,13.6 15,13.6 H10 Q7.4,13.6 7.4,16.2 V19.4 Q7.4,23 13,23Z" fill="#ffd748"/><path d="M17,16.4 L22.6,19.4 L17,22.4" fill="none" stroke="#444" stroke-width="1.6"/></svg>
<svg class="a" style="left:847px;top:109.5px" width="24" height="24" viewBox="0 0 24 24"><path d="M6,1.2 H17 L22.4,6 V21 H6Z" fill="#e9e2cc" stroke="#a59f8c" stroke-width="0.9"/><path d="M4,2.6 H15 L20.4,7.4 V22.4 H4Z" fill="#ece4c8" stroke="#9a937c" stroke-width="0.9"/><path d="M2,4 H13 L18.4,8.8 V23.4 H2Z" fill="#efe5c2" stroke="#8f8870" stroke-width="0.9"/><path d="M10,18 Q14,16 18.2,19 V23.2 H8Z" fill="#3f8fd0"/><path d="M12,20 Q15.6,19 18.2,21 V23.2 H11Z" fill="#7cc05a"/><rect x="2.6" y="11.6" width="13.4" height="8.6" rx="0.8" fill="#0a0a0a"/><rect x="6.8" y="9.8" width="4.4" height="2.4" fill="#0a0a0a"/><circle cx="9.4" cy="15.8" r="2.3" fill="#0a0a0a" stroke="#e8e8e8" stroke-width="1"/></svg>
<svg class="a" style="left:882px;top:109.5px" width="24" height="24" viewBox="0 0 24 24"><path d="M4.4,16.6 Q8,15 12,5.4 Q16,15 19.8,16.6" fill="none" stroke="#1b7fd4" stroke-width="3.4" stroke-linejoin="round"/><path d="M8.6,14.2 Q12,11.4 15.6,14.2" fill="none" stroke="#1b7fd4" stroke-width="2.2"/><circle cx="12" cy="5.4" r="3.4" fill="#1b7fd4"/><circle cx="4.4" cy="16.4" r="3.7" fill="#1b7fd4"/><circle cx="19.8" cy="16.4" r="3.7" fill="#1b7fd4"/></svg>
<svg class="a" style="left:188.1px;top:116.85px" width="13" height="7.5" viewBox="0 0 13 7.5"><path d="M0,0 H13 L6.5,7.5Z" fill="#9c9c9c"/></svg>
<svg class="a" style="left:5.6px;top:106px" width="7" height="32"><rect x="0.6" y="0" width="1.8" height="1.8" fill="#c2c2c2"/><rect x="1.7" y="1.1" width="1.5" height="1.5" fill="#fdfdfd"/><rect x="3.7" y="3" width="1.8" height="1.8" fill="#c2c2c2"/><rect x="4.8" y="4.1" width="1.5" height="1.5" fill="#fdfdfd"/><rect x="0.6" y="6" width="1.8" height="1.8" fill="#c2c2c2"/><rect x="1.7" y="7.1" width="1.5" height="1.5" fill="#fdfdfd"/><rect x="3.7" y="9" width="1.8" height="1.8" fill="#c2c2c2"/><rect x="4.8" y="10.1" width="1.5" height="1.5" fill="#fdfdfd"/><rect x="0.6" y="12" width="1.8" height="1.8" fill="#c2c2c2"/><rect x="1.7" y="13.1" width="1.5" height="1.5" fill="#fdfdfd"/><rect x="3.7" y="15" width="1.8" height="1.8" fill="#c2c2c2"/><rect x="4.8" y="16.1" width="1.5" height="1.5" fill="#fdfdfd"/><rect x="0.6" y="18" width="1.8" height="1.8" fill="#c2c2c2"/><rect x="1.7" y="19.1" width="1.5" height="1.5" fill="#fdfdfd"/><rect x="3.7" y="21" width="1.8" height="1.8" fill="#c2c2c2"/><rect x="4.8" y="22.1" width="1.5" height="1.5" fill="#fdfdfd"/><rect x="0.6" y="24" width="1.8" height="1.8" fill="#c2c2c2"/><rect x="1.7" y="25.1" width="1.5" height="1.5" fill="#fdfdfd"/><rect x="3.7" y="27" width="1.8" height="1.8" fill="#c2c2c2"/><rect x="4.8" y="28.1" width="1.5" height="1.5" fill="#fdfdfd"/></svg>
<svg class="a" style="left:423px;top:106px" width="7" height="32"><rect x="0.6" y="0" width="1.8" height="1.8" fill="#c2c2c2"/><rect x="1.7" y="1.1" width="1.5" height="1.5" fill="#fdfdfd"/><rect x="3.7" y="3" width="1.8" height="1.8" fill="#c2c2c2"/><rect x="4.8" y="4.1" width="1.5" height="1.5" fill="#fdfdfd"/><rect x="0.6" y="6" width="1.8" height="1.8" fill="#c2c2c2"/><rect x="1.7" y="7.1" width="1.5" height="1.5" fill="#fdfdfd"/><rect x="3.7" y="9" width="1.8" height="1.8" fill="#c2c2c2"/><rect x="4.8" y="10.1" width="1.5" height="1.5" fill="#fdfdfd"/><rect x="0.6" y="12" width="1.8" height="1.8" fill="#c2c2c2"/><rect x="1.7" y="13.1" width="1.5" height="1.5" fill="#fdfdfd"/><rect x="3.7" y="15" width="1.8" height="1.8" fill="#c2c2c2"/><rect x="4.8" y="16.1" width="1.5" height="1.5" fill="#fdfdfd"/><rect x="0.6" y="18" width="1.8" height="1.8" fill="#c2c2c2"/><rect x="1.7" y="19.1" width="1.5" height="1.5" fill="#fdfdfd"/><rect x="3.7" y="21" width="1.8" height="1.8" fill="#c2c2c2"/><rect x="4.8" y="22.1" width="1.5" height="1.5" fill="#fdfdfd"/><rect x="0.6" y="24" width="1.8" height="1.8" fill="#c2c2c2"/><rect x="1.7" y="25.1" width="1.5" height="1.5" fill="#fdfdfd"/><rect x="3.7" y="27" width="1.8" height="1.8" fill="#c2c2c2"/><rect x="4.8" y="28.1" width="1.5" height="1.5" fill="#fdfdfd"/></svg>
<svg class="a" style="left:717px;top:106px" width="7" height="32"><rect x="0.6" y="0" width="1.8" height="1.8" fill="#c2c2c2"/><rect x="1.7" y="1.1" width="1.5" height="1.5" fill="#fdfdfd"/><rect x="3.7" y="3" width="1.8" height="1.8" fill="#c2c2c2"/><rect x="4.8" y="4.1" width="1.5" height="1.5" fill="#fdfdfd"/><rect x="0.6" y="6" width="1.8" height="1.8" fill="#c2c2c2"/><rect x="1.7" y="7.1" width="1.5" height="1.5" fill="#fdfdfd"/><rect x="3.7" y="9" width="1.8" height="1.8" fill="#c2c2c2"/><rect x="4.8" y="10.1" width="1.5" height="1.5" fill="#fdfdfd"/><rect x="0.6" y="12" width="1.8" height="1.8" fill="#c2c2c2"/><rect x="1.7" y="13.1" width="1.5" height="1.5" fill="#fdfdfd"/><rect x="3.7" y="15" width="1.8" height="1.8" fill="#c2c2c2"/><rect x="4.8" y="16.1" width="1.5" height="1.5" fill="#fdfdfd"/><rect x="0.6" y="18" width="1.8" height="1.8" fill="#c2c2c2"/><rect x="1.7" y="19.1" width="1.5" height="1.5" fill="#fdfdfd"/><rect x="3.7" y="21" width="1.8" height="1.8" fill="#c2c2c2"/><rect x="4.8" y="22.1" width="1.5" height="1.5" fill="#fdfdfd"/><rect x="0.6" y="24" width="1.8" height="1.8" fill="#c2c2c2"/><rect x="1.7" y="25.1" width="1.5" height="1.5" fill="#fdfdfd"/><rect x="3.7" y="27" width="1.8" height="1.8" fill="#c2c2c2"/><rect x="4.8" y="28.1" width="1.5" height="1.5" fill="#fdfdfd"/></svg>
<svg class="a" style="left:801px;top:106px" width="7" height="32"><rect x="0.6" y="0" width="1.8" height="1.8" fill="#c2c2c2"/><rect x="1.7" y="1.1" width="1.5" height="1.5" fill="#fdfdfd"/><rect x="3.7" y="3" width="1.8" height="1.8" fill="#c2c2c2"/><rect x="4.8" y="4.1" width="1.5" height="1.5" fill="#fdfdfd"/><rect x="0.6" y="6" width="1.8" height="1.8" fill="#c2c2c2"/><rect x="1.7" y="7.1" width="1.5" height="1.5" fill="#fdfdfd"/><rect x="3.7" y="9" width="1.8" height="1.8" fill="#c2c2c2"/><rect x="4.8" y="10.1" width="1.5" height="1.5" fill="#fdfdfd"/><rect x="0.6" y="12" width="1.8" height="1.8" fill="#c2c2c2"/><rect x="1.7" y="13.1" width="1.5" height="1.5" fill="#fdfdfd"/><rect x="3.7" y="15" width="1.8" height="1.8" fill="#c2c2c2"/><rect x="4.8" y="16.1" width="1.5" height="1.5" fill="#fdfdfd"/><rect x="0.6" y="18" width="1.8" height="1.8" fill="#c2c2c2"/><rect x="1.7" y="19.1" width="1.5" height="1.5" fill="#fdfdfd"/><rect x="3.7" y="21" width="1.8" height="1.8" fill="#c2c2c2"/><rect x="4.8" y="22.1" width="1.5" height="1.5" fill="#fdfdfd"/><rect x="0.6" y="24" width="1.8" height="1.8" fill="#c2c2c2"/><rect x="1.7" y="25.1" width="1.5" height="1.5" fill="#fdfdfd"/><rect x="3.7" y="27" width="1.8" height="1.8" fill="#c2c2c2"/><rect x="4.8" y="28.1" width="1.5" height="1.5" fill="#fdfdfd"/></svg>
<svg class="a" style="left:8px;top:157.5px" width="24" height="24" viewBox="0 0 24 24"><path d="M3,3 L9,17 L15.6,3.4 L21,3" fill="none" stroke="#4a5a6a" stroke-width="1.3"/><circle cx="3" cy="3" r="2" fill="#fff" stroke="#4a5a6a" stroke-width="1.2"/><circle cx="9" cy="17" r="2" fill="#fff" stroke="#4a5a6a" stroke-width="1.2"/><circle cx="15.6" cy="3.4" r="2" fill="#fff" stroke="#4a5a6a" stroke-width="1.2"/><circle cx="21" cy="3" r="2" fill="#fff" stroke="#4a5a6a" stroke-width="1.2"/><g transform="translate(14,14)"><rect width="9.5" height="9.5" rx="1.6" fill="#5f9e4e" stroke="#4b8440" stroke-width="0.6"/><path d="M4.75,1.6 V7.9 M1.6,4.75 H7.9" stroke="#fff" stroke-width="2"/></g></svg>
<svg class="a" style="left:8px;top:190px" width="24" height="24" viewBox="0 0 24 24"><rect x="1.0" y="1.0" width="6.4" height="6.4" fill="#2a4468"/><rect x="7.4" y="1.0" width="6.4" height="6.4" fill="#7f9fc8"/><rect x="13.8" y="1.0" width="6.4" height="6.4" fill="#2a4468"/><rect x="1.0" y="7.4" width="6.4" height="6.4" fill="#7f9fc8"/><rect x="7.4" y="7.4" width="6.4" height="6.4" fill="#2a4468"/><rect x="13.8" y="7.4" width="6.4" height="6.4" fill="#7f9fc8"/><rect x="1.0" y="13.8" width="6.4" height="6.4" fill="#2a4468"/><rect x="7.4" y="13.8" width="6.4" height="6.4" fill="#7f9fc8"/><rect x="13.8" y="13.8" width="6.4" height="6.4" fill="#c5d8ee"/><g transform="translate(14,14)"><rect width="9.5" height="9.5" rx="1.6" fill="#5f9e4e" stroke="#4b8440" stroke-width="0.6"/><path d="M4.75,1.6 V7.9 M1.6,4.75 H7.9" stroke="#fff" stroke-width="2"/></g></svg>
<svg class="a" style="left:8px;top:224.5px" width="24" height="24" viewBox="0 0 24 24"><path d="M1.6,21.6 Q3,12 10,6 Q16,1.4 22.6,1 Q21,8 15.6,11.6 Q11,14.6 5.4,15.4Z" fill="#7f9fc4" stroke="#3a5478" stroke-width="1"/><path d="M1.6,21.6 Q6,12 19,3.4" fill="none" stroke="#2a3f5c" stroke-width="1.1"/><g transform="translate(14,14)"><rect width="9.5" height="9.5" rx="1.6" fill="#5f9e4e" stroke="#4b8440" stroke-width="0.6"/><path d="M4.75,1.6 V7.9 M1.6,4.75 H7.9" stroke="#fff" stroke-width="2"/></g></svg>
<svg class="a" style="left:8px;top:258.5px" width="24" height="24" viewBox="0 0 24 24"><path d="M3,4.6 Q5,1 10,1.6 Q15,0.6 17.6,4 Q19.6,7 17.6,11 L17,16.6 Q16.6,18.6 14.8,18 L14,12.6 Q11.6,14 8.4,12.6 L8,16 Q6,16.6 5.4,14.6 Q2,11 3,4.6Z" fill="#6d92c0" stroke="#2f4a70" stroke-width="1.1"/><circle cx="12.6" cy="6" r="0.9" fill="#1f3048"/><path d="M7.6,3.6 Q6,8 8.6,11" fill="none" stroke="#2f4a70" stroke-width="0.9"/><g transform="translate(14,14)"><rect width="9.5" height="9.5" rx="1.6" fill="#5f9e4e" stroke="#4b8440" stroke-width="0.6"/><path d="M4.75,1.6 V7.9 M1.6,4.75 H7.9" stroke="#fff" stroke-width="2"/></g></svg>
<svg class="a" style="left:8px;top:292.5px" width="24" height="24" viewBox="0 0 24 24"><circle cx="10.6" cy="10.6" r="9.6" fill="#cfdcf0" stroke="#3a5478" stroke-width="1.3"/><path d="M3.6,7 H9 V10 H5 Z M11,4 H16 L17.6,9 H12Z M7,12.6 H10 V16.6 H8Z M13,11.6 H17 L16,15 H13.6Z" fill="#3a5478" opacity="0.75"/><circle cx="10.6" cy="10.6" r="9.6" fill="none" stroke="#3a5478" stroke-width="1" stroke-dasharray="1.4 1"/><g transform="translate(14,14)"><rect width="9.5" height="9.5" rx="1.6" fill="#5f9e4e" stroke="#4b8440" stroke-width="0.6"/><path d="M4.75,1.6 V7.9 M1.6,4.75 H7.9" stroke="#fff" stroke-width="2"/></g></svg>
<svg class="a" style="left:8px;top:326px" width="24" height="24" viewBox="0 0 24 24"><circle cx="10.6" cy="10.6" r="9.8" fill="#3e6496" stroke="#1f3352" stroke-width="1.3"/><path d="M1.4,7.4 H19.8 M1.4,13.8 H19.8" stroke="#d8e4f4" stroke-width="2.2"/><path d="M10.6,1 V20.2 M10.6,1 Q3.6,10.6 10.6,20.2 M10.6,1 Q17.6,10.6 10.6,20.2" fill="none" stroke="#1f3352" stroke-width="1.1"/><g transform="translate(14,14)"><rect width="9.5" height="9.5" rx="1.6" fill="#5f9e4e" stroke="#4b8440" stroke-width="0.6"/><path d="M4.75,1.6 V7.9 M1.6,4.75 H7.9" stroke="#fff" stroke-width="2"/></g></svg>
<svg class="a" style="left:8px;top:360px" width="24" height="24" viewBox="0 0 24 24"><circle cx="10.6" cy="10.6" r="9.6" fill="#eef3fa" stroke="#6a8ab4" stroke-width="1.3"/><path d="M1,10.6 H20.2 M10.6,1 V20.2 M3,5.4 H18.2 M3,15.8 H18.2 M10.6,1 Q4,10.6 10.6,20.2 M10.6,1 Q17.2,10.6 10.6,20.2" fill="none" stroke="#6a8ab4" stroke-width="0.9"/><path d="M4.6,6.4 L9.6,15.4 L14,6.8 L17.6,6.6" fill="none" stroke="#1f2f44" stroke-width="1.2"/><circle cx="4.6" cy="6.4" r="1.5" fill="#fff" stroke="#1f2f44" stroke-width="1"/><circle cx="9.6" cy="15.4" r="1.5" fill="#fff" stroke="#1f2f44" stroke-width="1"/><circle cx="14" cy="6.8" r="1.5" fill="#fff" stroke="#1f2f44" stroke-width="1"/><circle cx="17.6" cy="6.6" r="1.5" fill="#fff" stroke="#1f2f44" stroke-width="1"/><g transform="translate(14,14)"><rect width="9.5" height="9.5" rx="1.6" fill="#5f9e4e" stroke="#4b8440" stroke-width="0.6"/><path d="M4.75,1.6 V7.9 M1.6,4.75 H7.9" stroke="#fff" stroke-width="2"/></g></svg>
<svg class="a" style="left:8px;top:393.5px" width="24" height="24" viewBox="0 0 24 24"><path d="M7.6,2.4 Q12.6,1.6 13.6,6.4 Q14.6,13 6.4,17 L5.8,15.8 Q10.4,12.6 9.6,9.6 Q5.4,10 5,6.4 Q4.8,3 7.6,2.4Z" fill="#4a6a94" stroke="#2a4264" stroke-width="0.8"/><g transform="translate(14,14)"><rect width="9.5" height="9.5" rx="1.6" fill="#5f9e4e" stroke="#4b8440" stroke-width="0.6"/><path d="M4.75,1.6 V7.9 M1.6,4.75 H7.9" stroke="#fff" stroke-width="2"/></g></svg>
<svg class="a" style="left:8px;top:429px" width="24" height="24" viewBox="0 0 24 24"><rect x="1.6" y="2" width="19.6" height="19.6" rx="1.6" fill="#a9c0de" stroke="#6a8ab4" stroke-width="1"/><g transform="translate(1.4,2.6) scale(0.88)"><path d="M3,3 L9,17 L15.6,3.4 L21,3" fill="none" stroke="#3a4a5c" stroke-width="1.3"/><circle cx="3" cy="3" r="2" fill="#fff" stroke="#3a4a5c" stroke-width="1.2"/><circle cx="9" cy="17" r="2" fill="#fff" stroke="#3a4a5c" stroke-width="1.2"/><circle cx="15.6" cy="3.4" r="2" fill="#fff" stroke="#3a4a5c" stroke-width="1.2"/><circle cx="21" cy="3" r="2" fill="#fff" stroke="#3a4a5c" stroke-width="1.2"/></g><g transform="translate(14,14)"><rect width="9.5" height="9.5" rx="1.6" fill="#5f9e4e" stroke="#4b8440" stroke-width="0.6"/><path d="M4.75,1.6 V7.9 M1.6,4.75 H7.9" stroke="#fff" stroke-width="2"/></g></svg>
<svg class="a" style="left:8px;top:463px" width="24" height="24" viewBox="0 0 24 24"><path d="M3,3 L9,17 L15.6,3.4 L21,3" fill="none" stroke="#4a5a6a" stroke-width="1.3"/><circle cx="3" cy="3" r="2" fill="#fff" stroke="#4a5a6a" stroke-width="1.2"/><circle cx="9" cy="17" r="2" fill="#fff" stroke="#4a5a6a" stroke-width="1.2"/><circle cx="15.6" cy="3.4" r="2" fill="#fff" stroke="#4a5a6a" stroke-width="1.2"/><circle cx="21" cy="3" r="2" fill="#fff" stroke="#4a5a6a" stroke-width="1.2"/><g transform="translate(13.6,14)"><rect width="9.6" height="9.6" rx="1.5" fill="#e8b820"/><circle cx="4.8" cy="4.8" r="2.2" fill="#fff"/><path d="M4.8,1 V8.6 M1,4.8 H8.6 M2.2,2.2 L7.3999999999999995,7.3999999999999995 M7.3999999999999995,2.2 L2.2,7.3999999999999995" stroke="#fff" stroke-width="1.1"/><circle cx="4.8" cy="4.8" r="1" fill="#e8b820"/></g></svg>
<svg class="a" style="left:39.1px;top:266.4px" width="13" height="7.2" viewBox="0 0 13 7.2"><path d="M0,0 H13 L6.5,7.2Z" fill="#000"/></svg>
<svg class="a" style="left:39.1px;top:300.4px" width="13" height="7.2" viewBox="0 0 13 7.2"><path d="M0,0 H13 L6.5,7.2Z" fill="#000"/></svg>
<svg class="a" style="left:39.1px;top:367.9px" width="13" height="7.2" viewBox="0 0 13 7.2"><path d="M0,0 H13 L6.5,7.2Z" fill="#000"/></svg>
<svg class="a" style="left:39.1px;top:469.9px" width="13" height="7.2" viewBox="0 0 13 7.2"><path d="M0,0 H13 L6.5,7.2Z" fill="#000"/></svg>
<svg class="a" style="left:8px;top:147.6px" width="46" height="7"><rect y="0.6" x="0" width="1.8" height="1.8" fill="#c8c8c8"/><rect y="1.7" x="1.1" width="1.5" height="1.5" fill="#fdfdfd"/><rect y="3.7" x="3" width="1.8" height="1.8" fill="#c8c8c8"/><rect y="4.8" x="4.1" width="1.5" height="1.5" fill="#fdfdfd"/><rect y="0.6" x="6" width="1.8" height="1.8" fill="#c8c8c8"/><rect y="1.7" x="7.1" width="1.5" height="1.5" fill="#fdfdfd"/><rect y="3.7" x="9" width="1.8" height="1.8" fill="#c8c8c8"/><rect y="4.8" x="10.1" width="1.5" height="1.5" fill="#fdfdfd"/><rect y="0.6" x="12" width="1.8" height="1.8" fill="#c8c8c8"/><rect y="1.7" x="13.1" width="1.5" height="1.5" fill="#fdfdfd"/><rect y="3.7" x="15" width="1.8" height="1.8" fill="#c8c8c8"/><rect y="4.8" x="16.1" width="1.5" height="1.5" fill="#fdfdfd"/><rect y="0.6" x="18" width="1.8" height="1.8" fill="#c8c8c8"/><rect y="1.7" x="19.1" width="1.5" height="1.5" fill="#fdfdfd"/><rect y="3.7" x="21" width="1.8" height="1.8" fill="#c8c8c8"/><rect y="4.8" x="22.1" width="1.5" height="1.5" fill="#fdfdfd"/><rect y="0.6" x="24" width="1.8" height="1.8" fill="#c8c8c8"/><rect y="1.7" x="25.1" width="1.5" height="1.5" fill="#fdfdfd"/><rect y="3.7" x="27" width="1.8" height="1.8" fill="#c8c8c8"/><rect y="4.8" x="28.1" width="1.5" height="1.5" fill="#fdfdfd"/><rect y="0.6" x="30" width="1.8" height="1.8" fill="#c8c8c8"/><rect y="1.7" x="31.1" width="1.5" height="1.5" fill="#fdfdfd"/><rect y="3.7" x="33" width="1.8" height="1.8" fill="#c8c8c8"/><rect y="4.8" x="34.1" width="1.5" height="1.5" fill="#fdfdfd"/><rect y="0.6" x="36" width="1.8" height="1.8" fill="#c8c8c8"/><rect y="1.7" x="37.1" width="1.5" height="1.5" fill="#fdfdfd"/><rect y="3.7" x="39" width="1.8" height="1.8" fill="#c8c8c8"/><rect y="4.8" x="40.1" width="1.5" height="1.5" fill="#fdfdfd"/></svg>
<svg class="a" style="left:8px;top:500.5px" width="46" height="7"><rect y="0.6" x="0" width="1.8" height="1.8" fill="#c8c8c8"/><rect y="1.7" x="1.1" width="1.5" height="1.5" fill="#fdfdfd"/><rect y="3.7" x="3" width="1.8" height="1.8" fill="#c8c8c8"/><rect y="4.8" x="4.1" width="1.5" height="1.5" fill="#fdfdfd"/><rect y="0.6" x="6" width="1.8" height="1.8" fill="#c8c8c8"/><rect y="1.7" x="7.1" width="1.5" height="1.5" fill="#fdfdfd"/><rect y="3.7" x="9" width="1.8" height="1.8" fill="#c8c8c8"/><rect y="4.8" x="10.1" width="1.5" height="1.5" fill="#fdfdfd"/><rect y="0.6" x="12" width="1.8" height="1.8" fill="#c8c8c8"/><rect y="1.7" x="13.1" width="1.5" height="1.5" fill="#fdfdfd"/><rect y="3.7" x="15" width="1.8" height="1.8" fill="#c8c8c8"/><rect y="4.8" x="16.1" width="1.5" height="1.5" fill="#fdfdfd"/><rect y="0.6" x="18" width="1.8" height="1.8" fill="#c8c8c8"/><rect y="1.7" x="19.1" width="1.5" height="1.5" fill="#fdfdfd"/><rect y="3.7" x="21" width="1.8" height="1.8" fill="#c8c8c8"/><rect y="4.8" x="22.1" width="1.5" height="1.5" fill="#fdfdfd"/><rect y="0.6" x="24" width="1.8" height="1.8" fill="#c8c8c8"/><rect y="1.7" x="25.1" width="1.5" height="1.5" fill="#fdfdfd"/><rect y="3.7" x="27" width="1.8" height="1.8" fill="#c8c8c8"/><rect y="4.8" x="28.1" width="1.5" height="1.5" fill="#fdfdfd"/><rect y="0.6" x="30" width="1.8" height="1.8" fill="#c8c8c8"/><rect y="1.7" x="31.1" width="1.5" height="1.5" fill="#fdfdfd"/><rect y="3.7" x="33" width="1.8" height="1.8" fill="#c8c8c8"/><rect y="4.8" x="34.1" width="1.5" height="1.5" fill="#fdfdfd"/><rect y="0.6" x="36" width="1.8" height="1.8" fill="#c8c8c8"/><rect y="1.7" x="37.1" width="1.5" height="1.5" fill="#fdfdfd"/><rect y="3.7" x="39" width="1.8" height="1.8" fill="#c8c8c8"/><rect y="4.8" x="40.1" width="1.5" height="1.5" fill="#fdfdfd"/></svg>
<svg class="a" style="left:65.5px;top:172.2px" width="16" height="16" viewBox="0 0 16 16"><path d="M2.6,9 L8,5.4 L12,11 L6,14.6Z" fill="#e64a3a"/><path d="M4,6 L9.6,3.4 L12.4,7.6 L7,10.4Z" fill="#ffd030"/><path d="M3,4.4 L7,2.6 L9,5.6 L5,7.6Z" fill="#4a8ad0"/><path d="M8.6,11.4 L14.6,3 L15.8,4 L10.4,12.6Z" fill="#e8a23a" stroke="#b87818" stroke-width="0.5"/><path d="M6.4,13 L10.6,11 L11,13.6 L8,14.6Z" fill="#d87a1a"/></svg>
<svg class="a" style="left:93px;top:172.2px" width="16" height="16" viewBox="0 0 16 16"><path d="M4.6,3 H10 V1.4 H12.4 V3 M5.6,5 V2.4 H11.4 V12.6 H5.6Z" fill="none" stroke="#9a9a9a" stroke-width="1"/><path d="M3,4.6 V13.6 H9.6 M1.4,6.4 V15 H8" fill="none" stroke="#9a9a9a" stroke-width="1"/><path d="M7.6,4.6 V9 M9.4,4.6 V9" stroke="#7a7a7a" stroke-width="0.9"/><g transform="translate(9,9.4)"><rect width="6.4" height="6.4" rx="1.6" fill="#5f9e4e" stroke="#4b8440" stroke-width="0.6"/><path d="M3.2,1.6 V4.800000000000001 M1.6,3.2 H4.800000000000001" stroke="#fff" stroke-width="2"/></g></svg>
<svg class="a" style="left:120.5px;top:172.2px" width="16" height="16" viewBox="0 0 16 16"><path d="M0.8,7.6 Q7,1.6 13.4,7.6 Q7,12.6 0.8,7.6Z" fill="#e9e9e9" stroke="#9a9a9a" stroke-width="0.9"/><circle cx="7.2" cy="7.2" r="2.8" fill="#4a5a78"/><circle cx="7.2" cy="7.2" r="1.2" fill="#1a2434"/><path d="M1.2,4.4 Q7,0.6 13,4.2" fill="none" stroke="#b0b0b0" stroke-width="0.9"/><path d="M8,10.4 H15.4 L11.7,14.4Z" fill="#000"/></svg>
<svg class="a" style="left:147px;top:172.2px" width="16" height="16" viewBox="0 0 16 16"><path d="M1.4,1.6 H14.6 V3 L9.6,8.8 V14 L6.4,15.4 V8.8 L1.4,3Z" fill="#8fb0d8" stroke="#5b86b8" stroke-width="0.9"/><rect x="1.4" y="1" width="13.2" height="1.8" fill="#e8d068"/></svg>
<svg class="a" style="left:174.5px;top:172.2px" width="16" height="16" viewBox="0 0 16 16"><text x="0.6" y="10.4" font-family="Liberation Serif" font-size="15" fill="#6a5a8a">ε</text><path d="M7.6,8.6 H14.8 V10 L12.4,12.4 V15.4 L10.2,15.4 V12.4 L7.6,10Z" fill="#bdbdbd" stroke="#9a9a9a" stroke-width="0.7"/></svg>
<svg class="a" style="left:219.5px;top:172.2px" width="16" height="16" viewBox="0 0 16 16"><path d="M1.6,1 V14.6 M1.6,4.2 H4 M1.6,8.8 H4 M1.6,13.2 H4" fill="none" stroke="#9a9a9a" stroke-width="0.8" stroke-dasharray="1 1"/><rect x="3.4" y="3" width="2.4" height="2.4" fill="#ffd030" stroke="#e09a10" stroke-width="0.6"/><rect x="3.4" y="7.6" width="2.4" height="2.4" fill="#ffd030" stroke="#e09a10" stroke-width="0.6"/><rect x="3.4" y="12" width="2.4" height="2.4" fill="#ffd030" stroke="#e09a10" stroke-width="0.6"/><path d="M9.4,0.8 H12.6 V8.6 H15.4 L11,14.6 L6.6,8.6 H9.4Z" fill="#5b8cc4" stroke="#3c6ea8" stroke-width="0.7"/></svg>
<svg class="a" style="left:246.5px;top:172.2px" width="16" height="16" viewBox="0 0 16 16"><path d="M1.6,1 V14.6 M1.6,4.2 H4 M1.6,8.8 H4 M1.6,13.2 H4" fill="none" stroke="#9a9a9a" stroke-width="0.8" stroke-dasharray="1 1"/><rect x="3.4" y="3" width="2.4" height="2.4" fill="#ffd030" stroke="#e09a10" stroke-width="0.6"/><rect x="3.4" y="7.6" width="2.4" height="2.4" fill="#ffd030" stroke="#e09a10" stroke-width="0.6"/><rect x="3.4" y="12" width="2.4" height="2.4" fill="#ffd030" stroke="#e09a10" stroke-width="0.6"/><path d="M9.4,14.6 H12.6 V6.8 H15.4 L11,0.8 L6.6,6.8 H9.4Z" fill="#4a86c8" stroke="#2a5a9a" stroke-width="0.7"/></svg>
<svg class="a" style="left:272.5px;top:172.2px" width="16" height="16" viewBox="0 0 16 16"><rect x="1.4" y="1" width="11" height="11" fill="#fafafa" stroke="#a8a8a8" stroke-width="1"/><rect x="9.4" y="10" width="6" height="4.4" rx="1" fill="#e02a3a"/><path d="M10.6,12.2 H14.2" stroke="#fff" stroke-width="1.2"/></svg>
<svg class="a" style="left:196.9px;top:176.1px" width="13.4" height="7" viewBox="0 0 13.4 7"><path d="M0,0 H13.4 L6.7,7Z" fill="#000"/></svg>
<svg class="a" style="left:62px;top:148.4px" width="128" height="7"><rect y="0.6" x="0" width="1.8" height="1.8" fill="#c8c8c8"/><rect y="1.7" x="1.1" width="1.5" height="1.5" fill="#fdfdfd"/><rect y="3.7" x="3" width="1.8" height="1.8" fill="#c8c8c8"/><rect y="4.8" x="4.1" width="1.5" height="1.5" fill="#fdfdfd"/><rect y="0.6" x="6" width="1.8" height="1.8" fill="#c8c8c8"/><rect y="1.7" x="7.1" width="1.5" height="1.5" fill="#fdfdfd"/><rect y="3.7" x="9" width="1.8" height="1.8" fill="#c8c8c8"/><rect y="4.8" x="10.1" width="1.5" height="1.5" fill="#fdfdfd"/><rect y="0.6" x="12" width="1.8" height="1.8" fill="#c8c8c8"/><rect y="1.7" x="13.1" width="1.5" height="1.5" fill="#fdfdfd"/><rect y="3.7" x="15" width="1.8" height="1.8" fill="#c8c8c8"/><rect y="4.8" x="16.1" width="1.5" height="1.5" fill="#fdfdfd"/><rect y="0.6" x="18" width="1.8" height="1.8" fill="#c8c8c8"/><rect y="1.7" x="19.1" width="1.5" height="1.5" fill="#fdfdfd"/><rect y="3.7" x="21" width="1.8" height="1.8" fill="#c8c8c8"/><rect y="4.8" x="22.1" width="1.5" height="1.5" fill="#fdfdfd"/><rect y="0.6" x="24" width="1.8" height="1.8" fill="#c8c8c8"/><rect y="1.7" x="25.1" width="1.5" height="1.5" fill="#fdfdfd"/><rect y="3.7" x="27" width="1.8" height="1.8" fill="#c8c8c8"/><rect y="4.8" x="28.1" width="1.5" height="1.5" fill="#fdfdfd"/><rect y="0.6" x="30" width="1.8" height="1.8" fill="#c8c8c8"/><rect y="1.7" x="31.1" width="1.5" height="1.5" fill="#fdfdfd"/><rect y="3.7" x="33" width="1.8" height="1.8" fill="#c8c8c8"/><rect y="4.8" x="34.1" width="1.5" height="1.5" fill="#fdfdfd"/><rect y="0.6" x="36" width="1.8" height="1.8" fill="#c8c8c8"/><rect y="1.7" x="37.1" width="1.5" height="1.5" fill="#fdfdfd"/><rect y="3.7" x="39" width="1.8" height="1.8" fill="#c8c8c8"/><rect y="4.8" x="40.1" width="1.5" height="1.5" fill="#fdfdfd"/><rect y="0.6" x="42" width="1.8" height="1.8" fill="#c8c8c8"/><rect y="1.7" x="43.1" width="1.5" height="1.5" fill="#fdfdfd"/><rect y="3.7" x="45" width="1.8" height="1.8" fill="#c8c8c8"/><rect y="4.8" x="46.1" width="1.5" height="1.5" fill="#fdfdfd"/><rect y="0.6" x="48" width="1.8" height="1.8" fill="#c8c8c8"/><rect y="1.7" x="49.1" width="1.5" height="1.5" fill="#fdfdfd"/><rect y="3.7" x="51" width="1.8" height="1.8" fill="#c8c8c8"/><rect y="4.8" x="52.1" width="1.5" height="1.5" fill="#fdfdfd"/><rect y="0.6" x="54" width="1.8" height="1.8" fill="#c8c8c8"/><rect y="1.7" x="55.1" width="1.5" height="1.5" fill="#fdfdfd"/><rect y="3.7" x="57" width="1.8" height="1.8" fill="#c8c8c8"/><rect y="4.8" x="58.1" width="1.5" height="1.5" fill="#fdfdfd"/><rect y="0.6" x="60" width="1.8" height="1.8" fill="#c8c8c8"/><rect y="1.7" x="61.1" width="1.5" height="1.5" fill="#fdfdfd"/><rect y="3.7" x="63" width="1.8" height="1.8" fill="#c8c8c8"/><rect y="4.8" x="64.1" width="1.5" height="1.5" fill="#fdfdfd"/><rect y="0.6" x="66" width="1.8" height="1.8" fill="#c8c8c8"/><rect y="1.7" x="67.1" width="1.5" height="1.5" fill="#fdfdfd"/><rect y="3.7" x="69" width="1.8" height="1.8" fill="#c8c8c8"/><rect y="4.8" x="70.1" width="1.5" height="1.5" fill="#fdfdfd"/><rect y="0.6" x="72" width="1.8" height="1.8" fill="#c8c8c8"/><rect y="1.7" x="73.1" width="1.5" height="1.5" fill="#fdfdfd"/><rect y="3.7" x="75" width="1.8" height="1.8" fill="#c8c8c8"/><rect y="4.8" x="76.1" width="1.5" height="1.5" fill="#fdfdfd"/><rect y="0.6" x="78" width="1.8" height="1.8" fill="#c8c8c8"/><rect y="1.7" x="79.1" width="1.5" height="1.5" fill="#fdfdfd"/><rect y="3.7" x="81" width="1.8" height="1.8" fill="#c8c8c8"/><rect y="4.8" x="82.1" width="1.5" height="1.5" fill="#fdfdfd"/><rect y="0.6" x="84" width="1.8" height="1.8" fill="#c8c8c8"/><rect y="1.7" x="85.1" width="1.5" height="1.5" fill="#fdfdfd"/><rect y="3.7" x="87" width="1.8" height="1.8" fill="#c8c8c8"/><rect y="4.8" x="88.1" width="1.5" height="1.5" fill="#fdfdfd"/><rect y="0.6" x="90" width="1.8" height="1.8" fill="#c8c8c8"/><rect y="1.7" x="91.1" width="1.5" height="1.5" fill="#fdfdfd"/><rect y="3.7" x="93" width="1.8" height="1.8" fill="#c8c8c8"/><rect y="4.8" x="94.1" width="1.5" height="1.5" fill="#fdfdfd"/><rect y="0.6" x="96" width="1.8" height="1.8" fill="#c8c8c8"/><rect y="1.7" x="97.1" width="1.5" height="1.5" fill="#fdfdfd"/><rect y="3.7" x="99" width="1.8" height="1.8" fill="#c8c8c8"/><rect y="4.8" x="100.1" width="1.5" height="1.5" fill="#fdfdfd"/><rect y="0.6" x="102" width="1.8" height="1.8" fill="#c8c8c8"/><rect y="1.7" x="103.1" width="1.5" height="1.5" fill="#fdfdfd"/><rect y="3.7" x="105" width="1.8" height="1.8" fill="#c8c8c8"/><rect y="4.8" x="106.1" width="1.5" height="1.5" fill="#fdfdfd"/><rect y="0.6" x="108" width="1.8" height="1.8" fill="#c8c8c8"/><rect y="1.7" x="109.1" width="1.5" height="1.5" fill="#fdfdfd"/><rect y="3.7" x="111" width="1.8" height="1.8" fill="#c8c8c8"/><rect y="4.8" x="112.1" width="1.5" height="1.5" fill="#fdfdfd"/><rect y="0.6" x="114" width="1.8" height="1.8" fill="#c8c8c8"/><rect y="1.7" x="115.1" width="1.5" height="1.5" fill="#fdfdfd"/><rect y="3.7" x="117" width="1.8" height="1.8" fill="#c8c8c8"/><rect y="4.8" x="118.1" width="1.5" height="1.5" fill="#fdfdfd"/><rect y="0.6" x="120" width="1.8" height="1.8" fill="#c8c8c8"/><rect y="1.7" x="121.1" width="1.5" height="1.5" fill="#fdfdfd"/><rect y="3.7" x="123" width="1.8" height="1.8" fill="#c8c8c8"/><rect y="4.8" x="124.1" width="1.5" height="1.5" fill="#fdfdfd"/></svg>
<svg class="a" style="left:254px;top:148.4px" width="124" height="7"><rect y="0.6" x="0" width="1.8" height="1.8" fill="#c8c8c8"/><rect y="1.7" x="1.1" width="1.5" height="1.5" fill="#fdfdfd"/><rect y="3.7" x="3" width="1.8" height="1.8" fill="#c8c8c8"/><rect y="4.8" x="4.1" width="1.5" height="1.5" fill="#fdfdfd"/><rect y="0.6" x="6" width="1.8" height="1.8" fill="#c8c8c8"/><rect y="1.7" x="7.1" width="1.5" height="1.5" fill="#fdfdfd"/><rect y="3.7" x="9" width="1.8" height="1.8" fill="#c8c8c8"/><rect y="4.8" x="10.1" width="1.5" height="1.5" fill="#fdfdfd"/><rect y="0.6" x="12" width="1.8" height="1.8" fill="#c8c8c8"/><rect y="1.7" x="13.1" width="1.5" height="1.5" fill="#fdfdfd"/><rect y="3.7" x="15" width="1.8" height="1.8" fill="#c8c8c8"/><rect y="4.8" x="16.1" width="1.5" height="1.5" fill="#fdfdfd"/><rect y="0.6" x="18" width="1.8" height="1.8" fill="#c8c8c8"/><rect y="1.7" x="19.1" width="1.5" height="1.5" fill="#fdfdfd"/><rect y="3.7" x="21" width="1.8" height="1.8" fill="#c8c8c8"/><rect y="4.8" x="22.1" width="1.5" height="1.5" fill="#fdfdfd"/><rect y="0.6" x="24" width="1.8" height="1.8" fill="#c8c8c8"/><rect y="1.7" x="25.1" width="1.5" height="1.5" fill="#fdfdfd"/><rect y="3.7" x="27" width="1.8" height="1.8" fill="#c8c8c8"/><rect y="4.8" x="28.1" width="1.5" height="1.5" fill="#fdfdfd"/><rect y="0.6" x="30" width="1.8" height="1.8" fill="#c8c8c8"/><rect y="1.7" x="31.1" width="1.5" height="1.5" fill="#fdfdfd"/><rect y="3.7" x="33" width="1.8" height="1.8" fill="#c8c8c8"/><rect y="4.8" x="34.1" width="1.5" height="1.5" fill="#fdfdfd"/><rect y="0.6" x="36" width="1.8" height="1.8" fill="#c8c8c8"/><rect y="1.7" x="37.1" width="1.5" height="1.5" fill="#fdfdfd"/><rect y="3.7" x="39" width="1.8" height="1.8" fill="#c8c8c8"/><rect y="4.8" x="40.1" width="1.5" height="1.5" fill="#fdfdfd"/><rect y="0.6" x="42" width="1.8" height="1.8" fill="#c8c8c8"/><rect y="1.7" x="43.1" width="1.5" height="1.5" fill="#fdfdfd"/><rect y="3.7" x="45" width="1.8" height="1.8" fill="#c8c8c8"/><rect y="4.8" x="46.1" width="1.5" height="1.5" fill="#fdfdfd"/><rect y="0.6" x="48" width="1.8" height="1.8" fill="#c8c8c8"/><rect y="1.7" x="49.1" width="1.5" height="1.5" fill="#fdfdfd"/><rect y="3.7" x="51" width="1.8" height="1.8" fill="#c8c8c8"/><rect y="4.8" x="52.1" width="1.5" height="1.5" fill="#fdfdfd"/><rect y="0.6" x="54" width="1.8" height="1.8" fill="#c8c8c8"/><rect y="1.7" x="55.1" width="1.5" height="1.5" fill="#fdfdfd"/><rect y="3.7" x="57" width="1.8" height="1.8" fill="#c8c8c8"/><rect y="4.8" x="58.1" width="1.5" height="1.5" fill="#fdfdfd"/><rect y="0.6" x="60" width="1.8" height="1.8" fill="#c8c8c8"/><rect y="1.7" x="61.1" width="1.5" height="1.5" fill="#fdfdfd"/><rect y="3.7" x="63" width="1.8" height="1.8" fill="#c8c8c8"/><rect y="4.8" x="64.1" width="1.5" height="1.5" fill="#fdfdfd"/><rect y="0.6" x="66" width="1.8" height="1.8" fill="#c8c8c8"/><rect y="1.7" x="67.1" width="1.5" height="1.5" fill="#fdfdfd"/><rect y="3.7" x="69" width="1.8" height="1.8" fill="#c8c8c8"/><rect y="4.8" x="70.1" width="1.5" height="1.5" fill="#fdfdfd"/><rect y="0.6" x="72" width="1.8" height="1.8" fill="#c8c8c8"/><rect y="1.7" x="73.1" width="1.5" height="1.5" fill="#fdfdfd"/><rect y="3.7" x="75" width="1.8" height="1.8" fill="#c8c8c8"/><rect y="4.8" x="76.1" width="1.5" height="1.5" fill="#fdfdfd"/><rect y="0.6" x="78" width="1.8" height="1.8" fill="#c8c8c8"/><rect y="1.7" x="79.1" width="1.5" height="1.5" fill="#fdfdfd"/><rect y="3.7" x="81" width="1.8" height="1.8" fill="#c8c8c8"/><rect y="4.8" x="82.1" width="1.5" height="1.5" fill="#fdfdfd"/><rect y="0.6" x="84" width="1.8" height="1.8" fill="#c8c8c8"/><rect y="1.7" x="85.1" width="1.5" height="1.5" fill="#fdfdfd"/><rect y="3.7" x="87" width="1.8" height="1.8" fill="#c8c8c8"/><rect y="4.8" x="88.1" width="1.5" height="1.5" fill="#fdfdfd"/><rect y="0.6" x="90" width="1.8" height="1.8" fill="#c8c8c8"/><rect y="1.7" x="91.1" width="1.5" height="1.5" fill="#fdfdfd"/><rect y="3.7" x="93" width="1.8" height="1.8" fill="#c8c8c8"/><rect y="4.8" x="94.1" width="1.5" height="1.5" fill="#fdfdfd"/><rect y="0.6" x="96" width="1.8" height="1.8" fill="#c8c8c8"/><rect y="1.7" x="97.1" width="1.5" height="1.5" fill="#fdfdfd"/><rect y="3.7" x="99" width="1.8" height="1.8" fill="#c8c8c8"/><rect y="4.8" x="100.1" width="1.5" height="1.5" fill="#fdfdfd"/><rect y="0.6" x="102" width="1.8" height="1.8" fill="#c8c8c8"/><rect y="1.7" x="103.1" width="1.5" height="1.5" fill="#fdfdfd"/><rect y="3.7" x="105" width="1.8" height="1.8" fill="#c8c8c8"/><rect y="4.8" x="106.1" width="1.5" height="1.5" fill="#fdfdfd"/><rect y="0.6" x="108" width="1.8" height="1.8" fill="#c8c8c8"/><rect y="1.7" x="109.1" width="1.5" height="1.5" fill="#fdfdfd"/><rect y="3.7" x="111" width="1.8" height="1.8" fill="#c8c8c8"/><rect y="4.8" x="112.1" width="1.5" height="1.5" fill="#fdfdfd"/><rect y="0.6" x="114" width="1.8" height="1.8" fill="#c8c8c8"/><rect y="1.7" x="115.1" width="1.5" height="1.5" fill="#fdfdfd"/><rect y="3.7" x="117" width="1.8" height="1.8" fill="#c8c8c8"/><rect y="4.8" x="118.1" width="1.5" height="1.5" fill="#fdfdfd"/></svg>
<div class="a" style="left:380.2px;top:144.2px;width:15.4px;height:15.8px;border:1px solid #8a8a8a;border-radius:3.5px;background:linear-gradient(#fbfbfb,#ebebeb)"></div>
<div class="a" style="left:397.3px;top:144.2px;width:15.4px;height:15.8px;border:1px solid #8a8a8a;border-radius:3.5px;background:linear-gradient(#fbfbfb,#ebebeb)"></div>
<svg class="a" style="left:380.2px;top:144.2px" width="16" height="16"><path d="M6.6,3.8 H11.6 V8.6 H9.6" fill="none" stroke="#000" stroke-width="1.5"/><rect x="4.2" y="6.6" width="5.2" height="4.6" fill="#fff" stroke="#000" stroke-width="1.5"/><path d="M4.2,7 H9.4 M6.6,4.2 H11.6" stroke="#000" stroke-width="2"/></svg>
<svg class="a" style="left:397.3px;top:144.2px" width="16" height="16"><path d="M4.2,4.4 L11.2,11.2 M11.2,4.4 L4.2,11.2" stroke="#000" stroke-width="2"/></svg>
<svg class="a" style="left:3px;top:4px" width="22" height="25" viewBox="0 0 22 25"><path d="M4,18 Q1.6,9 8.6,4.6 L12,6 L6.6,19.6 Q5,20.6 4,18Z" fill="#e4ee62"/><path d="M6,8 Q8,5 10.6,4.6 L9,10Z" fill="#c9c9a8"/><path d="M10.6,22.4 Q8,16 13,10.4 Q15.6,7.6 18.6,9.6 Q20.6,16 16,21.6 Q13,23.6 10.6,22.4Z" fill="#e9ef6a"/><path d="M15,22.4 Q18.4,20 19.2,17 L19.4,21.6 Q17.6,23 15,22.4Z" fill="#b9b9a0"/><path d="M6,21 L15.2,6.2" stroke="#1e6a20" stroke-width="2.2"/><path d="M19,1.6 L18.4,9.4 L12.4,5.4Z" fill="#1a8a24"/><path d="M1.6,21.4 L8,19.6 L5.4,24.4Z" fill="#14501a"/></svg>
<svg class="a" style="left:2370px;top:4px" width="170" height="26" viewBox="2370 4 170 26"><path d="M2376,16.4 H2391.2" stroke="#111" stroke-width="1.1"/><path d="M2448.6,12.6 V9.6 H2459.6 V20.4 H2456.8" fill="none" stroke="#111" stroke-width="1.2"/><rect x="2445.6" y="12.7" width="11.2" height="10.8" fill="none" stroke="#111" stroke-width="1.2"/><path d="M2516.2,9.2 L2531,23.8 M2531,9.2 L2516.2,23.8" stroke="#111" stroke-width="1.15"/></svg>
<svg class="a" style="left:1682px;top:1346px" width="30" height="30" viewBox="0 0 26 26"><g transform="rotate(-28 12 14)"><rect x="6" y="4" width="11.6" height="18" rx="5.6" fill="#222"/><rect x="7.6" y="13" width="8.4" height="7.4" rx="3.6" fill="#e8e8e8"/><path d="M11.8,5.4 V11.6" stroke="#fff" stroke-width="1.6"/><circle cx="11.8" cy="16.6" r="1.7" fill="#222"/></g><path d="M2,13.6 L5,14.6 M20,4.4 L22.4,2.6 M22.6,8 L24.6,7.6" stroke="#222" stroke-width="1.4"/></svg>
<svg class="a" style="left:1904px;top:1348px" width="22" height="26" viewBox="0 0 22 26"><path d="M5.2,12 V7.6 Q5.2,2.2 11,2.2 Q16.8,2.2 16.8,7.6 V12" fill="none" stroke="#a9a9a9" stroke-width="2.6"/><rect x="2.4" y="11.6" width="17.2" height="12.6" rx="1.4" fill="#6f6f6f"/></svg>
<svg class="a" style="left:2338px;top:1351px" width="22" height="22" viewBox="0 0 22 22"><circle cx="11" cy="11" r="9.4" fill="#6a6a6a" stroke="#2a2a2a" stroke-width="1.8"/><path d="M11,1.6 V20.4 M1.6,11 H20.4" stroke="#1a1a1a" stroke-width="1.3"/><ellipse cx="11" cy="11" rx="4.6" ry="9.2" fill="none" stroke="#1a1a1a" stroke-width="1.2"/><ellipse cx="11" cy="11" rx="9.2" ry="4.4" fill="none" stroke="#1a1a1a" stroke-width="1.2"/><circle cx="11" cy="11" r="3.4" fill="#e8e8e8"/></svg>
<svg class="a" style="left:2516px;top:1351px" width="24" height="23" viewBox="0 0 24 23"><path d="M12,1.6 Q22.6,1.6 22.6,9.6 Q22.6,15 16.6,16.8 L18.6,21.4 L11.6,17.6 Q1.6,17.4 1.6,9.6 Q1.6,1.6 12,1.6Z" fill="#7a7a7a"/><circle cx="7.4" cy="9.8" r="1.7" fill="#fff"/><circle cx="12.2" cy="9.8" r="1.7" fill="#fff"/><circle cx="17" cy="9.8" r="1.7" fill="#fff"/></svg>
<span class="t" id="t0" style="left:31.5px;top:10px;font-size:17.5px;letter-spacing:-0.155px;">QGIS 2.18.23 - test_data</span>
<span class="t" id="t1" style="left:10px;top:42px;font-size:16px;letter-spacing:0.041px;">Projet</span>
<span class="t" id="t2" style="left:67px;top:42px;font-size:16px;letter-spacing:-0.159px;">Éditer</span>
<span class="t" id="t3" style="left:123px;top:42px;font-size:16px;letter-spacing:-0.688px;">Vue</span>
<span class="t" id="t4" style="left:164px;top:42px;font-size:16px;letter-spacing:-0.631px;">Couche</span>
<span class="t" id="t5" style="left:231px;top:42px;font-size:16px;letter-spacing:-0.527px;">Préférences</span>
<span class="t" id="t6" style="left:327px;top:42px;font-size:16px;letter-spacing:-0.283px;">Extension</span>
<span class="t" id="t7" style="left:410px;top:42px;font-size:16px;letter-spacing:-0.378px;">Vecteur</span>
<span class="t" id="t8" style="left:477px;top:42px;font-size:16px;letter-spacing:-0.625px;">Raster</span>
<span class="t" id="t9" style="left:536px;top:42px;font-size:16px;letter-spacing:-0.468px;">Base de données</span>
<span class="t" id="t10" style="left:669px;top:42px;font-size:16px;letter-spacing:0.319px;">Internet</span>
<span class="t" id="t11" style="left:741px;top:42px;font-size:16px;letter-spacing:-0.344px;">Aide</span>
<span class="t" id="t12" style="left:193.5px;top:146px;font-size:14.5px;letter-spacing:-0.789px;">Couches</span>
<span class="t" id="t13" style="left:138.5px;top:204px;font-size:16px;font-weight:700;color:#fff;letter-spacing:0.720px;text-decoration:underline;">OSI_all_plastics_n/km2</span>
<span class="t" id="t14" style="left:154.3px;top:226px;font-size:16px;letter-spacing:0.050px;">0 particles/km2</span>
<span class="t" id="t15" style="left:159.8px;top:246px;font-size:16px;letter-spacing:0.101px;">0 - 20'0000 particles/km2</span>
<span class="t" id="t16" style="left:154.3px;top:266px;font-size:16px;letter-spacing:0.114px;">20'000 - 40'000 particles/km2</span>
<span class="t" id="t17" style="left:154.3px;top:286px;font-size:16px;letter-spacing:0.114px;">40'000 - 80'000 particles/km2</span>
<span class="t" id="t18" style="left:154.3px;top:306px;font-size:16px;letter-spacing:0.120px;">80'000 - 160'000 particles/km2</span>
<span class="t" id="t19" style="left:154.8px;top:326px;font-size:16px;letter-spacing:0.097px;">160'000 - 3200'000 particles/km2</span>
<span class="t" id="t20" style="left:155.5px;top:346px;font-size:16px;letter-spacing:0.139px;">> 320'000 particles/km2</span>
<span class="t" id="t21" style="left:138.5px;top:368px;font-size:16px;font-weight:700;letter-spacing:0.720px;">OSI_all_plastics_g/km2</span>
<span class="t" id="t22" style="left:154.3px;top:389px;font-size:16px;letter-spacing:0.380px;">0 g/km2</span>
<span class="t" id="t23" style="left:159.8px;top:408px;font-size:16px;letter-spacing:0.342px;">0 - 20 g/km2</span>
<span class="t" id="t24" style="left:159.8px;top:427px;font-size:16px;letter-spacing:0.323px;">20 - 40 g/km2</span>
<span class="t" id="t25" style="left:159.8px;top:446px;font-size:16px;letter-spacing:0.323px;">40 - 80 g/km2</span>
<span class="t" id="t26" style="left:159.8px;top:465px;font-size:16px;letter-spacing:0.305px;">80 - 160 g/km2</span>
<span class="t" id="t27" style="left:160.3px;top:484px;font-size:16px;letter-spacing:0.255px;">160 - 320 g/km2</span>
<span class="t" id="t28" style="left:161px;top:503px;font-size:16px;letter-spacing:0.400px;">> 320 g/km2</span>
<span class="t" id="t29" style="left:138.5px;top:525px;font-size:16px;font-weight:700;letter-spacing:0.769px;">all_plastics_n/km2</span>
<span class="t" id="t30" style="left:154.3px;top:547px;font-size:16px;letter-spacing:0.050px;">0 particles/km2</span>
<span class="t" id="t31" style="left:159.8px;top:567px;font-size:16px;letter-spacing:0.101px;">0 - 20'0000 particles/km2</span>
<span class="t" id="t32" style="left:154.3px;top:587px;font-size:16px;letter-spacing:0.114px;">20'000 - 40'000 particles/km2</span>
<span class="t" id="t33" style="left:154.3px;top:607px;font-size:16px;letter-spacing:0.114px;">40'000 - 80'000 particles/km2</span>
<span class="t" id="t34" style="left:154.3px;top:627px;font-size:16px;letter-spacing:0.120px;">80'000 - 160'000 particles/km2</span>
<span class="t" id="t35" style="left:154.8px;top:647px;font-size:16px;letter-spacing:0.097px;">160'000 - 3200'000 particles/km2</span>
<span class="t" id="t36" style="left:155.5px;top:667px;font-size:16px;letter-spacing:0.139px;">> 320'000 particles/km2</span>
<span class="t" id="t37" style="left:138.5px;top:689px;font-size:16px;font-weight:700;letter-spacing:0.769px;">all_plastics_g/km2</span>
<span class="t" id="t38" style="left:154.3px;top:711px;font-size:16px;letter-spacing:0.380px;">0 g/km2</span>
<span class="t" id="t39" style="left:159.8px;top:731px;font-size:16px;letter-spacing:0.342px;">0 - 20 g/km2</span>
<span class="t" id="t40" style="left:159.8px;top:751px;font-size:16px;letter-spacing:0.323px;">20 - 40 g/km2</span>
<span class="t" id="t41" style="left:159.8px;top:771px;font-size:16px;letter-spacing:0.323px;">40 - 80 g/km2</span>
<span class="t" id="t42" style="left:159.8px;top:791px;font-size:16px;letter-spacing:0.305px;">80 - 160 g/km2</span>
<span class="t" id="t43" style="left:160.3px;top:811px;font-size:16px;letter-spacing:0.255px;">160 - 320 g/km2</span>
<span class="t" id="t44" style="left:161px;top:831px;font-size:16px;letter-spacing:0.400px;">> 320 g/km2</span>
<span class="t" id="t45" style="left:132.5px;top:850px;font-size:16px;font-weight:700;letter-spacing:0.661px;">ne_10m_ocean</span>
<span class="t" id="t46" style="left:1292px;top:1355px;font-size:16px;letter-spacing:-0.286px;">Coordonnée</span>
<span class="t" id="t47" style="left:1448.8px;top:1355px;font-size:16px;letter-spacing:0.447px;">8°28.18′O,48°21.66′N</span>
<span class="t" id="t48" style="left:1723.8px;top:1355px;font-size:16px;letter-spacing:-0.614px;">Échelle</span>
<span class="t" id="t49" style="left:1785.5px;top:1355px;font-size:16px;letter-spacing:0.247px;">1:6 061 192</span>
<span class="t" id="t50" style="left:1941px;top:1355px;font-size:16px;letter-spacing:-0.625px;">Loupe</span>
<span class="t" id="t51" style="left:1991.8px;top:1355px;font-size:16px;letter-spacing:0.093px;">100%</span>
<span class="t" id="t52" style="left:2085px;top:1355px;font-size:16px;letter-spacing:-0.299px;">Rotation</span>
<span class="t" id="t53" style="left:2157px;top:1355px;font-size:16px;letter-spacing:0.125px;">0,0</span>
<span class="t" id="t54" style="left:2275px;top:1354px;font-size:16px;letter-spacing:-0.789px;">Rendu</span>
<span class="t" id="t55" style="left:2363px;top:1355px;font-size:16px;letter-spacing:-0.297px;">EPSG:3857 (ALV)</span>
</body></html>
